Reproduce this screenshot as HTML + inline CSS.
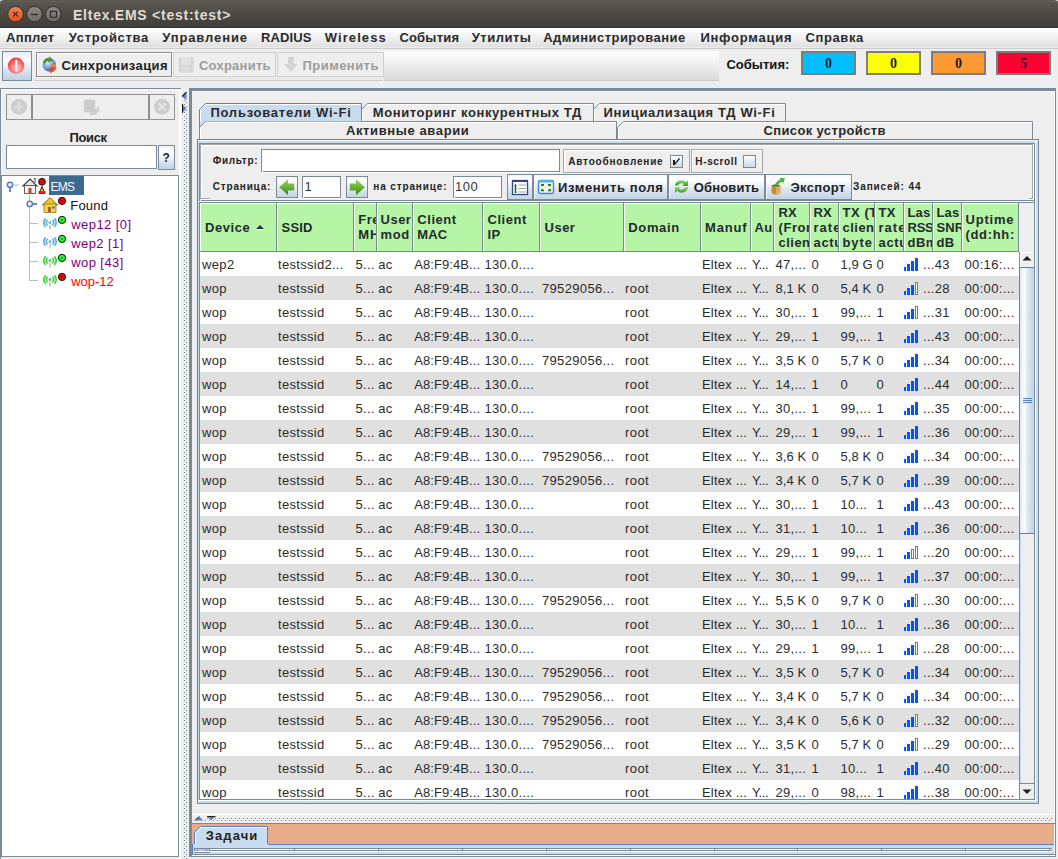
<!DOCTYPE html>
<html><head><meta charset="utf-8"><title>Eltex.EMS</title>
<style>
html,body{margin:0;padding:0;}
body{width:1058px;height:859px;overflow:hidden;position:relative;background:#eeeeee;font-family:"Liberation Sans",sans-serif;}
body div{position:absolute;}
.t{white-space:nowrap;}
svg{position:absolute;}
</style></head><body>
<div style="left:0px;top:0px;width:1058px;height:28px;background:#dcdcdc;"></div>
<div style="left:0px;top:0px;width:1058px;height:27px;background:linear-gradient(#59574f,#57554d 15%,#4d4b45 50%,#403e3a);border-radius:4px 4px 0 0;"></div>
<div style="left:0px;top:1px;width:1058px;height:1px;background:#636157;border-radius:4px 4px 0 0;"></div>
<div style="left:0px;top:27px;width:1058px;height:1px;background:#33322e;"></div>
<svg style="position:absolute;left:0;top:0" width="70" height="27">
<defs><linearGradient id="gc" x1="0" y1="0" x2="0" y2="1"><stop offset="0" stop-color="#f4845a"/><stop offset="1" stop-color="#e0501c"/></linearGradient>
<linearGradient id="gg" x1="0" y1="0" x2="0" y2="1"><stop offset="0" stop-color="#8a8984"/><stop offset="1" stop-color="#6b6a65"/></linearGradient></defs>
<circle cx="15.5" cy="14.2" r="7.8" fill="url(#gc)" stroke="#2e2d2a" stroke-width="1"/>
<path d="M13 11.7 L18 16.7 M18 11.7 L13 16.7" stroke="#3a2a22" stroke-width="1.2"/>
<circle cx="34.4" cy="14.2" r="7.8" fill="url(#gg)" stroke="#2e2d2a" stroke-width="1"/>
<path d="M31 14.5 H38" stroke="#2f2e2b" stroke-width="1.3"/>
<circle cx="53.3" cy="14.2" r="7.8" fill="url(#gg)" stroke="#2e2d2a" stroke-width="1"/>
<rect x="50.5" y="11.3" width="6" height="6" fill="none" stroke="#2f2e2b" stroke-width="1.2"/>
</svg>
<div class="t" style="left:73px;top:8px;font-size:14px;line-height:14px;font-weight:bold;color:#dfdbd2;letter-spacing:0.750px;">Eltex.EMS &lt;test:test&gt;</div>
<div style="left:0px;top:28px;width:1058px;height:20px;background:linear-gradient(#ffffff,#f8f8f8 20%,#ececec 60%,#dedede);"></div>
<div style="left:0px;top:47px;width:1058px;height:1px;background:#ebebeb;"></div>
<div style="left:0px;top:48px;width:1058px;height:1px;background:#cbcbcb;"></div>
<div class="t" style="left:6.1px;top:31px;font-size:13px;line-height:13px;font-weight:bold;color:#2a2a2a;letter-spacing:0.280px;">Апплет</div>
<div class="t" style="left:68.8px;top:31px;font-size:13px;line-height:13px;font-weight:bold;color:#2a2a2a;letter-spacing:0.667px;">Устройства</div>
<div class="t" style="left:162.2px;top:31px;font-size:13px;line-height:13px;font-weight:bold;color:#2a2a2a;letter-spacing:0.889px;">Управление</div>
<div class="t" style="left:261.1px;top:31px;font-size:13px;line-height:13px;font-weight:bold;color:#2a2a2a;letter-spacing:0.080px;">RADIUS</div>
<div class="t" style="left:324.7px;top:31px;font-size:13px;line-height:13px;font-weight:bold;color:#2a2a2a;letter-spacing:1.100px;">Wireless</div>
<div class="t" style="left:399.4px;top:31px;font-size:13px;line-height:13px;font-weight:bold;color:#2a2a2a;letter-spacing:0.200px;">События</div>
<div class="t" style="left:471.8px;top:31px;font-size:13px;line-height:13px;font-weight:bold;color:#2a2a2a;letter-spacing:0.483px;">Утилиты</div>
<div class="t" style="left:543.2px;top:31px;font-size:13px;line-height:13px;font-weight:bold;color:#2a2a2a;letter-spacing:0.456px;">Администрирование</div>
<div class="t" style="left:700.4px;top:31px;font-size:13px;line-height:13px;font-weight:bold;color:#2a2a2a;letter-spacing:0.767px;">Информация</div>
<div class="t" style="left:805.5px;top:31px;font-size:13px;line-height:13px;font-weight:bold;color:#2a2a2a;letter-spacing:0.600px;">Справка</div>
<div style="left:0px;top:49px;width:1058px;height:39px;background:#eeeeee;"></div>
<div style="left:2px;top:51px;width:28px;height:28px;border:1px solid #7a8a99;background:linear-gradient(#e4ecf6,#ffffff 30%,#dde8f3 60%,#bcd0e4);"></div>
<svg style="position:absolute;left:6px;top:56px" width="20" height="20">
<defs><radialGradient id="rg" cx="0.55" cy="0.65" r="0.75"><stop offset="0" stop-color="#ffc8c8"/><stop offset="0.55" stop-color="#ff6a6a"/><stop offset="1" stop-color="#f01818"/></radialGradient></defs>
<circle cx="10.1" cy="9.8" r="8.2" fill="url(#rg)"/>
<rect x="9" y="3.5" width="2.3" height="8" fill="#fff" rx="1"/>
<rect x="9" y="13" width="2.3" height="2.4" fill="#fff"/>
</svg>
<div style="left:36px;top:52px;width:134px;height:23px;border:1px solid #8a8a8a;box-shadow:inset 1px 1px 0 #fff, 1px 1px 0 #fff;background:#eeeeee;"></div>
<svg style="position:absolute;left:41px;top:56px" width="17" height="17">
<defs><radialGradient id="gl" cx="0.4" cy="0.35" r="0.7"><stop offset="0" stop-color="#e0ecf8"/><stop offset="0.5" stop-color="#7fa4d8"/><stop offset="1" stop-color="#2e5aa8"/></radialGradient></defs>
<circle cx="8.3" cy="8.8" r="6.8" fill="url(#gl)"/>
<path d="M2.3 6.5 Q3.5 2 8 2.3 L8.5 0.8 L11.5 4.2 L7.5 6.2 L7.8 4.5 Q4.8 4.5 3.8 7.5 Z" fill="#4a9a22" stroke="#2a6a10" stroke-width="0.4"/>
<path d="M14.5 9.5 L14.8 12.5 Q13.5 15.8 10 16 L9.7 17 L8.3 13.5 L10.8 11.5 L10.5 13.6 Q12.3 13.2 12.6 11 Z" fill="#f05a28" stroke="#a02a10" stroke-width="0.5"/>
<rect x="9.8" y="8.2" width="5.2" height="3.2" fill="#f47a40"/>
</svg>
<div class="t" style="left:61.4px;top:59px;font-size:13px;line-height:13px;font-weight:bold;color:#222;letter-spacing:0.408px;">Синхронизация</div>
<div style="left:173px;top:52px;width:101px;height:23px;border:1px solid #cfcfcf;background:#eeeeee;"></div>
<div style="left:277px;top:52px;width:105px;height:23px;border:1px solid #cfcfcf;background:#eeeeee;"></div>
<svg style="position:absolute;left:178px;top:57px" width="16" height="16">
<path d="M0.5 0.5 H15.5 V15.5 H2.5 L0.5 13.5 Z" fill="#d6d6d6"/>
<rect x="3" y="1" width="10" height="7" fill="#e2e2e2"/>
<rect x="4" y="9.5" width="8" height="6" fill="#dcdcdc"/>
</svg>
<svg style="position:absolute;left:282px;top:56px" width="18" height="18">
<path d="M6 1 H12 V8 H16 L9 16 L2 8 H6 Z" fill="#d4d4d4"/>
</svg>
<div class="t" style="left:198.9px;top:59px;font-size:13px;line-height:13px;font-weight:bold;color:#9c9c9c;letter-spacing:0.262px;">Сохранить</div>
<div class="t" style="left:302.5px;top:59px;font-size:13px;line-height:13px;font-weight:bold;color:#9c9c9c;letter-spacing:0.450px;">Применить</div>
<div style="left:384px;top:51px;width:335px;height:29px;background:linear-gradient(#ffffff,#f3f3f3 35%,#e6e6e6 70%,#dadada);border-bottom:1px solid #cccccc;"></div>
<div style="left:34px;top:78px;width:349px;height:1px;background:#e2e2e2;"></div>
<div style="left:34px;top:80px;width:349px;height:1px;background:#cdcdcd;"></div>
<div class="t" style="left:726.4px;top:58px;font-size:13px;line-height:13px;font-weight:bold;color:#111;letter-spacing:0.029px;">События:</div>
<div style="left:801px;top:51px;width:51px;height:20px;border:2px solid #7d7d7d;background:#00bfff;"></div>
<div class="t" style="left:825px;top:57px;font-size:14px;line-height:14px;font-weight:bold;font-family:'Liberation Serif',serif;color:#1a1a2a;">0</div>
<div style="left:866px;top:51px;width:51px;height:20px;border:2px solid #7d7d7d;background:#ffff00;"></div>
<div class="t" style="left:890px;top:57px;font-size:14px;line-height:14px;font-weight:bold;font-family:'Liberation Serif',serif;color:#1a1a2a;">0</div>
<div style="left:931px;top:51px;width:51px;height:20px;border:2px solid #7d7d7d;background:#ff9933;"></div>
<div class="t" style="left:955px;top:57px;font-size:14px;line-height:14px;font-weight:bold;font-family:'Liberation Serif',serif;color:#1a1a2a;">0</div>
<div style="left:996px;top:51px;width:51px;height:20px;border:2px solid #7d7d7d;background:#ff0033;"></div>
<div class="t" style="left:1020px;top:57px;font-size:14px;line-height:14px;font-weight:bold;font-family:'Liberation Serif',serif;color:#1a1a2a;">5</div>
<div style="left:0px;top:88px;width:181px;height:771px;background:#eeeeee;"></div>
<div style="left:0px;top:88px;width:181px;height:1px;background:#7a8a99;"></div>
<div style="left:0px;top:88px;width:1px;height:771px;background:#7a8a99;"></div>
<div style="left:1px;top:89px;width:180px;height:1px;background:#fafafa;"></div>
<div style="left:1px;top:89px;width:1px;height:86px;background:#fafafa;"></div>
<div style="left:6px;top:94px;width:167px;height:24px;border:1px solid #909090;background:#eeeeee;"></div>
<div style="left:31px;top:95px;width:2px;height:24px;background:#909090;"></div>
<div style="left:148px;top:95px;width:2px;height:24px;background:#909090;"></div>
<svg style="position:absolute;left:10px;top:98px" width="18" height="18">
<circle cx="9" cy="8.7" r="8" fill="#cdcdcd"/><path d="M9 4 V13.5 M4.3 8.7 H13.7" stroke="#dddddd" stroke-width="2"/></svg>
<svg style="position:absolute;left:153px;top:98px" width="18" height="18">
<circle cx="9" cy="8.7" r="8" fill="#cdcdcd"/><path d="M5.7 5.4 L12.3 12 M12.3 5.4 L5.7 12" stroke="#e4e4e4" stroke-width="2.2"/></svg>
<svg style="position:absolute;left:82px;top:98px" width="18" height="18">
<g fill="#cdcdcd" stroke="#c2c2c2" stroke-width="0.6">
<rect x="2" y="10" width="11" height="4" rx="2"/><rect x="2" y="6" width="11" height="4" rx="2"/><rect x="2" y="2" width="11" height="4.5" rx="2.2"/>
</g>
<path d="M9 11 L15.5 11 L15.5 8.5 L17 10 L17 13.5 L11 13.5 Z" fill="#d0d0d0" stroke="#c4c4c4" stroke-width="0.5"/>
<path d="M8 16.5 L8 14 L10 12 L10 13.5 L15.5 13.5 L14 16.5 Z" fill="#d0d0d0" stroke="#c4c4c4" stroke-width="0.5"/>
</svg>
<div class="t" style="left:69.5px;top:131px;font-size:13px;line-height:13px;font-weight:bold;color:#222;letter-spacing:-0.375px;">Поиск</div>
<div style="left:6px;top:145px;width:151px;height:24px;background:#fff;border-top:1px solid #7a8a99;border-left:1px solid #7a8a99;border-right:1px solid #7a8a99;border-bottom:1px solid #7a8a99;box-sizing:border-box;"></div>
<div style="left:158px;top:145px;width:17px;height:25px;border:1px solid #7a8a99;box-sizing:border-box;background:linear-gradient(#eef3fa,#ffffff 30%,#d8e4f0 70%,#bed2e6);"></div>
<div class="t" style="left:162.5px;top:152px;font-size:12px;line-height:12px;font-weight:bold;color:#222;">?</div>
<div style="left:1px;top:175px;width:178px;height:682px;background:#fff;border:1px solid #7a8a99;box-sizing:border-box;"></div>
<div style="left:0px;top:175px;width:2px;height:682px;background:#7a8a99;"></div>
<div style="left:181px;top:88px;width:8px;height:771px;background:#eeeeee;"></div>
<div style="left:179px;top:89px;width:2px;height:770px;background:#ffffff;"></div>
<svg style="position:absolute;left:0;top:0" width="190" height="859"><g fill="#6a7a8a"><rect x="184" y="100" width="1" height="1"/><rect x="186" y="102" width="1" height="1"/><rect x="184" y="104" width="1" height="1"/><rect x="186" y="106" width="1" height="1"/><rect x="184" y="108" width="1" height="1"/><rect x="186" y="110" width="1" height="1"/><rect x="184" y="112" width="1" height="1"/><rect x="186" y="114" width="1" height="1"/><rect x="184" y="116" width="1" height="1"/><rect x="186" y="118" width="1" height="1"/><rect x="184" y="120" width="1" height="1"/><rect x="186" y="122" width="1" height="1"/><rect x="184" y="124" width="1" height="1"/><rect x="186" y="126" width="1" height="1"/><rect x="184" y="128" width="1" height="1"/><rect x="186" y="130" width="1" height="1"/><rect x="184" y="132" width="1" height="1"/><rect x="186" y="134" width="1" height="1"/><rect x="184" y="136" width="1" height="1"/><rect x="186" y="138" width="1" height="1"/><rect x="184" y="140" width="1" height="1"/><rect x="186" y="142" width="1" height="1"/><rect x="184" y="144" width="1" height="1"/><rect x="186" y="146" width="1" height="1"/><rect x="184" y="148" width="1" height="1"/><rect x="186" y="150" width="1" height="1"/><rect x="184" y="152" width="1" height="1"/><rect x="186" y="154" width="1" height="1"/><rect x="184" y="156" width="1" height="1"/><rect x="186" y="158" width="1" height="1"/><rect x="184" y="160" width="1" height="1"/><rect x="186" y="162" width="1" height="1"/><rect x="184" y="164" width="1" height="1"/><rect x="186" y="166" width="1" height="1"/><rect x="184" y="168" width="1" height="1"/><rect x="186" y="170" width="1" height="1"/><rect x="184" y="172" width="1" height="1"/><rect x="186" y="174" width="1" height="1"/><rect x="184" y="176" width="1" height="1"/><rect x="186" y="178" width="1" height="1"/><rect x="184" y="180" width="1" height="1"/><rect x="186" y="182" width="1" height="1"/><rect x="184" y="184" width="1" height="1"/><rect x="186" y="186" width="1" height="1"/><rect x="184" y="188" width="1" height="1"/><rect x="186" y="190" width="1" height="1"/><rect x="184" y="192" width="1" height="1"/><rect x="186" y="194" width="1" height="1"/><rect x="184" y="196" width="1" height="1"/><rect x="186" y="198" width="1" height="1"/><rect x="184" y="200" width="1" height="1"/><rect x="186" y="202" width="1" height="1"/><rect x="184" y="204" width="1" height="1"/><rect x="186" y="206" width="1" height="1"/><rect x="184" y="208" width="1" height="1"/><rect x="186" y="210" width="1" height="1"/><rect x="184" y="212" width="1" height="1"/><rect x="186" y="214" width="1" height="1"/><rect x="184" y="216" width="1" height="1"/><rect x="186" y="218" width="1" height="1"/><rect x="184" y="220" width="1" height="1"/><rect x="186" y="222" width="1" height="1"/><rect x="184" y="224" width="1" height="1"/><rect x="186" y="226" width="1" height="1"/><rect x="184" y="228" width="1" height="1"/><rect x="186" y="230" width="1" height="1"/><rect x="184" y="232" width="1" height="1"/><rect x="186" y="234" width="1" height="1"/><rect x="184" y="236" width="1" height="1"/><rect x="186" y="238" width="1" height="1"/><rect x="184" y="240" width="1" height="1"/><rect x="186" y="242" width="1" height="1"/><rect x="184" y="244" width="1" height="1"/><rect x="186" y="246" width="1" height="1"/><rect x="184" y="248" width="1" height="1"/><rect x="186" y="250" width="1" height="1"/><rect x="184" y="252" width="1" height="1"/><rect x="186" y="254" width="1" height="1"/><rect x="184" y="256" width="1" height="1"/><rect x="186" y="258" width="1" height="1"/><rect x="184" y="260" width="1" height="1"/><rect x="186" y="262" width="1" height="1"/><rect x="184" y="264" width="1" height="1"/><rect x="186" y="266" width="1" height="1"/><rect x="184" y="268" width="1" height="1"/><rect x="186" y="270" width="1" height="1"/><rect x="184" y="272" width="1" height="1"/><rect x="186" y="274" width="1" height="1"/><rect x="184" y="276" width="1" height="1"/><rect x="186" y="278" width="1" height="1"/><rect x="184" y="280" width="1" height="1"/><rect x="186" y="282" width="1" height="1"/><rect x="184" y="284" width="1" height="1"/><rect x="186" y="286" width="1" height="1"/><rect x="184" y="288" width="1" height="1"/><rect x="186" y="290" width="1" height="1"/><rect x="184" y="292" width="1" height="1"/><rect x="186" y="294" width="1" height="1"/><rect x="184" y="296" width="1" height="1"/><rect x="186" y="298" width="1" height="1"/><rect x="184" y="300" width="1" height="1"/><rect x="186" y="302" width="1" height="1"/><rect x="184" y="304" width="1" height="1"/><rect x="186" y="306" width="1" height="1"/><rect x="184" y="308" width="1" height="1"/><rect x="186" y="310" width="1" height="1"/><rect x="184" y="312" width="1" height="1"/><rect x="186" y="314" width="1" height="1"/><rect x="184" y="316" width="1" height="1"/><rect x="186" y="318" width="1" height="1"/><rect x="184" y="320" width="1" height="1"/><rect x="186" y="322" width="1" height="1"/><rect x="184" y="324" width="1" height="1"/><rect x="186" y="326" width="1" height="1"/><rect x="184" y="328" width="1" height="1"/><rect x="186" y="330" width="1" height="1"/><rect x="184" y="332" width="1" height="1"/><rect x="186" y="334" width="1" height="1"/><rect x="184" y="336" width="1" height="1"/><rect x="186" y="338" width="1" height="1"/><rect x="184" y="340" width="1" height="1"/><rect x="186" y="342" width="1" height="1"/><rect x="184" y="344" width="1" height="1"/><rect x="186" y="346" width="1" height="1"/><rect x="184" y="348" width="1" height="1"/><rect x="186" y="350" width="1" height="1"/><rect x="184" y="352" width="1" height="1"/><rect x="186" y="354" width="1" height="1"/><rect x="184" y="356" width="1" height="1"/><rect x="186" y="358" width="1" height="1"/><rect x="184" y="360" width="1" height="1"/><rect x="186" y="362" width="1" height="1"/><rect x="184" y="364" width="1" height="1"/><rect x="186" y="366" width="1" height="1"/><rect x="184" y="368" width="1" height="1"/><rect x="186" y="370" width="1" height="1"/><rect x="184" y="372" width="1" height="1"/><rect x="186" y="374" width="1" height="1"/><rect x="184" y="376" width="1" height="1"/><rect x="186" y="378" width="1" height="1"/><rect x="184" y="380" width="1" height="1"/><rect x="186" y="382" width="1" height="1"/><rect x="184" y="384" width="1" height="1"/><rect x="186" y="386" width="1" height="1"/><rect x="184" y="388" width="1" height="1"/><rect x="186" y="390" width="1" height="1"/><rect x="184" y="392" width="1" height="1"/><rect x="186" y="394" width="1" height="1"/><rect x="184" y="396" width="1" height="1"/><rect x="186" y="398" width="1" height="1"/><rect x="184" y="400" width="1" height="1"/><rect x="186" y="402" width="1" height="1"/><rect x="184" y="404" width="1" height="1"/><rect x="186" y="406" width="1" height="1"/><rect x="184" y="408" width="1" height="1"/><rect x="186" y="410" width="1" height="1"/><rect x="184" y="412" width="1" height="1"/><rect x="186" y="414" width="1" height="1"/><rect x="184" y="416" width="1" height="1"/><rect x="186" y="418" width="1" height="1"/><rect x="184" y="420" width="1" height="1"/><rect x="186" y="422" width="1" height="1"/><rect x="184" y="424" width="1" height="1"/><rect x="186" y="426" width="1" height="1"/><rect x="184" y="428" width="1" height="1"/><rect x="186" y="430" width="1" height="1"/><rect x="184" y="432" width="1" height="1"/><rect x="186" y="434" width="1" height="1"/><rect x="184" y="436" width="1" height="1"/><rect x="186" y="438" width="1" height="1"/><rect x="184" y="440" width="1" height="1"/><rect x="186" y="442" width="1" height="1"/><rect x="184" y="444" width="1" height="1"/><rect x="186" y="446" width="1" height="1"/><rect x="184" y="448" width="1" height="1"/><rect x="186" y="450" width="1" height="1"/><rect x="184" y="452" width="1" height="1"/><rect x="186" y="454" width="1" height="1"/><rect x="184" y="456" width="1" height="1"/><rect x="186" y="458" width="1" height="1"/><rect x="184" y="460" width="1" height="1"/><rect x="186" y="462" width="1" height="1"/><rect x="184" y="464" width="1" height="1"/><rect x="186" y="466" width="1" height="1"/><rect x="184" y="468" width="1" height="1"/><rect x="186" y="470" width="1" height="1"/><rect x="184" y="472" width="1" height="1"/><rect x="186" y="474" width="1" height="1"/><rect x="184" y="476" width="1" height="1"/><rect x="186" y="478" width="1" height="1"/><rect x="184" y="480" width="1" height="1"/><rect x="186" y="482" width="1" height="1"/><rect x="184" y="484" width="1" height="1"/><rect x="186" y="486" width="1" height="1"/><rect x="184" y="488" width="1" height="1"/><rect x="186" y="490" width="1" height="1"/><rect x="184" y="492" width="1" height="1"/><rect x="186" y="494" width="1" height="1"/><rect x="184" y="496" width="1" height="1"/><rect x="186" y="498" width="1" height="1"/><rect x="184" y="500" width="1" height="1"/><rect x="186" y="502" width="1" height="1"/><rect x="184" y="504" width="1" height="1"/><rect x="186" y="506" width="1" height="1"/><rect x="184" y="508" width="1" height="1"/><rect x="186" y="510" width="1" height="1"/><rect x="184" y="512" width="1" height="1"/><rect x="186" y="514" width="1" height="1"/><rect x="184" y="516" width="1" height="1"/><rect x="186" y="518" width="1" height="1"/><rect x="184" y="520" width="1" height="1"/><rect x="186" y="522" width="1" height="1"/><rect x="184" y="524" width="1" height="1"/><rect x="186" y="526" width="1" height="1"/><rect x="184" y="528" width="1" height="1"/><rect x="186" y="530" width="1" height="1"/><rect x="184" y="532" width="1" height="1"/><rect x="186" y="534" width="1" height="1"/><rect x="184" y="536" width="1" height="1"/><rect x="186" y="538" width="1" height="1"/><rect x="184" y="540" width="1" height="1"/><rect x="186" y="542" width="1" height="1"/><rect x="184" y="544" width="1" height="1"/><rect x="186" y="546" width="1" height="1"/><rect x="184" y="548" width="1" height="1"/><rect x="186" y="550" width="1" height="1"/><rect x="184" y="552" width="1" height="1"/><rect x="186" y="554" width="1" height="1"/><rect x="184" y="556" width="1" height="1"/><rect x="186" y="558" width="1" height="1"/><rect x="184" y="560" width="1" height="1"/><rect x="186" y="562" width="1" height="1"/><rect x="184" y="564" width="1" height="1"/><rect x="186" y="566" width="1" height="1"/><rect x="184" y="568" width="1" height="1"/><rect x="186" y="570" width="1" height="1"/><rect x="184" y="572" width="1" height="1"/><rect x="186" y="574" width="1" height="1"/><rect x="184" y="576" width="1" height="1"/><rect x="186" y="578" width="1" height="1"/><rect x="184" y="580" width="1" height="1"/><rect x="186" y="582" width="1" height="1"/><rect x="184" y="584" width="1" height="1"/><rect x="186" y="586" width="1" height="1"/><rect x="184" y="588" width="1" height="1"/><rect x="186" y="590" width="1" height="1"/><rect x="184" y="592" width="1" height="1"/><rect x="186" y="594" width="1" height="1"/><rect x="184" y="596" width="1" height="1"/><rect x="186" y="598" width="1" height="1"/><rect x="184" y="600" width="1" height="1"/><rect x="186" y="602" width="1" height="1"/><rect x="184" y="604" width="1" height="1"/><rect x="186" y="606" width="1" height="1"/><rect x="184" y="608" width="1" height="1"/><rect x="186" y="610" width="1" height="1"/><rect x="184" y="612" width="1" height="1"/><rect x="186" y="614" width="1" height="1"/><rect x="184" y="616" width="1" height="1"/><rect x="186" y="618" width="1" height="1"/><rect x="184" y="620" width="1" height="1"/><rect x="186" y="622" width="1" height="1"/><rect x="184" y="624" width="1" height="1"/><rect x="186" y="626" width="1" height="1"/><rect x="184" y="628" width="1" height="1"/><rect x="186" y="630" width="1" height="1"/><rect x="184" y="632" width="1" height="1"/><rect x="186" y="634" width="1" height="1"/><rect x="184" y="636" width="1" height="1"/><rect x="186" y="638" width="1" height="1"/><rect x="184" y="640" width="1" height="1"/><rect x="186" y="642" width="1" height="1"/><rect x="184" y="644" width="1" height="1"/><rect x="186" y="646" width="1" height="1"/><rect x="184" y="648" width="1" height="1"/><rect x="186" y="650" width="1" height="1"/><rect x="184" y="652" width="1" height="1"/><rect x="186" y="654" width="1" height="1"/><rect x="184" y="656" width="1" height="1"/><rect x="186" y="658" width="1" height="1"/><rect x="184" y="660" width="1" height="1"/><rect x="186" y="662" width="1" height="1"/><rect x="184" y="664" width="1" height="1"/><rect x="186" y="666" width="1" height="1"/><rect x="184" y="668" width="1" height="1"/><rect x="186" y="670" width="1" height="1"/><rect x="184" y="672" width="1" height="1"/><rect x="186" y="674" width="1" height="1"/><rect x="184" y="676" width="1" height="1"/><rect x="186" y="678" width="1" height="1"/><rect x="184" y="680" width="1" height="1"/><rect x="186" y="682" width="1" height="1"/><rect x="184" y="684" width="1" height="1"/><rect x="186" y="686" width="1" height="1"/><rect x="184" y="688" width="1" height="1"/><rect x="186" y="690" width="1" height="1"/><rect x="184" y="692" width="1" height="1"/><rect x="186" y="694" width="1" height="1"/><rect x="184" y="696" width="1" height="1"/><rect x="186" y="698" width="1" height="1"/><rect x="184" y="700" width="1" height="1"/><rect x="186" y="702" width="1" height="1"/><rect x="184" y="704" width="1" height="1"/><rect x="186" y="706" width="1" height="1"/><rect x="184" y="708" width="1" height="1"/><rect x="186" y="710" width="1" height="1"/><rect x="184" y="712" width="1" height="1"/><rect x="186" y="714" width="1" height="1"/><rect x="184" y="716" width="1" height="1"/><rect x="186" y="718" width="1" height="1"/><rect x="184" y="720" width="1" height="1"/><rect x="186" y="722" width="1" height="1"/><rect x="184" y="724" width="1" height="1"/><rect x="186" y="726" width="1" height="1"/><rect x="184" y="728" width="1" height="1"/><rect x="186" y="730" width="1" height="1"/><rect x="184" y="732" width="1" height="1"/><rect x="186" y="734" width="1" height="1"/><rect x="184" y="736" width="1" height="1"/><rect x="186" y="738" width="1" height="1"/><rect x="184" y="740" width="1" height="1"/><rect x="186" y="742" width="1" height="1"/><rect x="184" y="744" width="1" height="1"/><rect x="186" y="746" width="1" height="1"/><rect x="184" y="748" width="1" height="1"/><rect x="186" y="750" width="1" height="1"/><rect x="184" y="752" width="1" height="1"/><rect x="186" y="754" width="1" height="1"/><rect x="184" y="756" width="1" height="1"/><rect x="186" y="758" width="1" height="1"/><rect x="184" y="760" width="1" height="1"/><rect x="186" y="762" width="1" height="1"/><rect x="184" y="764" width="1" height="1"/><rect x="186" y="766" width="1" height="1"/><rect x="184" y="768" width="1" height="1"/><rect x="186" y="770" width="1" height="1"/><rect x="184" y="772" width="1" height="1"/><rect x="186" y="774" width="1" height="1"/><rect x="184" y="776" width="1" height="1"/><rect x="186" y="778" width="1" height="1"/><rect x="184" y="780" width="1" height="1"/><rect x="186" y="782" width="1" height="1"/><rect x="184" y="784" width="1" height="1"/><rect x="186" y="786" width="1" height="1"/><rect x="184" y="788" width="1" height="1"/><rect x="186" y="790" width="1" height="1"/><rect x="184" y="792" width="1" height="1"/><rect x="186" y="794" width="1" height="1"/><rect x="184" y="796" width="1" height="1"/><rect x="186" y="798" width="1" height="1"/><rect x="184" y="800" width="1" height="1"/><rect x="186" y="802" width="1" height="1"/><rect x="184" y="804" width="1" height="1"/><rect x="186" y="806" width="1" height="1"/><rect x="184" y="808" width="1" height="1"/><rect x="186" y="810" width="1" height="1"/><rect x="184" y="812" width="1" height="1"/><rect x="186" y="814" width="1" height="1"/><rect x="184" y="816" width="1" height="1"/><rect x="186" y="818" width="1" height="1"/><rect x="184" y="820" width="1" height="1"/><rect x="186" y="822" width="1" height="1"/><rect x="184" y="824" width="1" height="1"/><rect x="186" y="826" width="1" height="1"/><rect x="184" y="828" width="1" height="1"/><rect x="186" y="830" width="1" height="1"/><rect x="184" y="832" width="1" height="1"/><rect x="186" y="834" width="1" height="1"/><rect x="184" y="836" width="1" height="1"/><rect x="186" y="838" width="1" height="1"/><rect x="184" y="840" width="1" height="1"/><rect x="186" y="842" width="1" height="1"/><rect x="184" y="844" width="1" height="1"/><rect x="186" y="846" width="1" height="1"/><rect x="184" y="848" width="1" height="1"/><rect x="186" y="850" width="1" height="1"/><rect x="184" y="852" width="1" height="1"/><rect x="186" y="854" width="1" height="1"/><rect x="184" y="856" width="1" height="1"/><rect x="186" y="858" width="1" height="1"/></g><path d="M186.5 92 L182 96.5 L186.5 100 Z" fill="#5b7fc6"/><path d="M186.3 92.2 L182.2 96.3" stroke="#111" stroke-width="1.2"/><path d="M182.5 104.5 L186.5 108.5 L182.5 112.5 Z" fill="#5b7fc6"/><rect x="182" y="104" width="1" height="9" fill="#111"/></svg>
<svg style="position:absolute;left:0;top:0" width="180" height="300"><line x1="29.5" y1="195" x2="29.5" y2="281" stroke="#a9bfd6" stroke-width="1"/><line x1="29.5" y1="223.5" x2="38" y2="223.5" stroke="#a9bfd6" stroke-width="1"/><line x1="29.5" y1="242.5" x2="38" y2="242.5" stroke="#a9bfd6" stroke-width="1"/><line x1="29.5" y1="261.5" x2="38" y2="261.5" stroke="#a9bfd6" stroke-width="1"/><line x1="29.5" y1="280.5" x2="38" y2="280.5" stroke="#a9bfd6" stroke-width="1"/><circle cx="10" cy="184.8" r="2.6" fill="#fff" stroke="#5b7fc6" stroke-width="1.6"/><line x1="10" y1="187.5" x2="10" y2="192" stroke="#5b7fc6" stroke-width="1.8"/><line x1="13" y1="185" x2="19" y2="185" stroke="#a9bfd6"/><circle cx="29.8" cy="203.9" r="2.6" fill="#fff" stroke="#5b7fc6" stroke-width="1.6"/><line x1="32.5" y1="204" x2="37" y2="204" stroke="#5b7fc6" stroke-width="1.8"/><path d="M23 186 L30 179 L37 186 Z" fill="#e8e8e8" stroke="#3a3a3a" stroke-width="1.1"/><rect x="24.5" y="185.5" width="11" height="8" fill="#f2f2f2" stroke="#555" stroke-width="0.9"/><rect x="28.5" y="188" width="3" height="5.5" fill="#b0501a"/><rect x="34" y="178.5" width="1.5" height="4" fill="#eee" stroke="#555" stroke-width="0.6"/><path d="M39 193.5 L42 186.5 L45 193.5 Z" fill="#f0c020" stroke="#111" stroke-width="0.9"/><rect x="38.5" y="191" width="7" height="2.5" fill="#ee2020"/><circle cx="42" cy="181.8" r="3.4" fill="#ff0000" stroke="#111" stroke-width="1"/><circle cx="42" cy="181.8" r="1" fill="#600"/><path d="M42.5 205 L50 197.5 L57.5 205 Z" fill="#f5c320" stroke="#6a5a20" stroke-width="0.9"/><rect x="44" y="204" width="12" height="8.5" fill="#fbd040" stroke="#8a6a10" stroke-width="0.7"/><rect x="48" y="207" width="3" height="5" fill="#a06020"/><rect x="52" y="206.5" width="3" height="2" fill="#5a7ac0"/><circle cx="62" cy="200.9" r="3.6" fill="#ff0000" stroke="#111" stroke-width="1"/><circle cx="62" cy="200.9" r="1" fill="#600"/><rect x="49" y="224.6" width="2" height="5" fill="#cfcfcf"/><circle cx="50" cy="222.6" r="1.4" fill="#5aaedc"/><path d="M47.6 219.79999999999998 A3.6 3.6 0 0 0 47.6 225.4 M52.4 219.79999999999998 A3.6 3.6 0 0 1 52.4 225.4" stroke="#5aaedc" fill="none" stroke-width="1.7"/><path d="M45.6 218.29999999999998 A6 6 0 0 0 45.6 226.9 M54.4 218.29999999999998 A6 6 0 0 1 54.4 226.9" stroke="#5aaedc" fill="none" stroke-width="1.7"/><circle cx="62" cy="219.9" r="3.6" fill="#22ff22" stroke="#111" stroke-width="1"/><circle cx="62" cy="219.9" r="0.9" fill="#0a6a2a"/><rect x="49" y="243.6" width="2" height="5" fill="#cfcfcf"/><circle cx="50" cy="241.6" r="1.4" fill="#5aaedc"/><path d="M47.6 238.79999999999998 A3.6 3.6 0 0 0 47.6 244.4 M52.4 238.79999999999998 A3.6 3.6 0 0 1 52.4 244.4" stroke="#5aaedc" fill="none" stroke-width="1.7"/><path d="M45.6 237.29999999999998 A6 6 0 0 0 45.6 245.9 M54.4 237.29999999999998 A6 6 0 0 1 54.4 245.9" stroke="#5aaedc" fill="none" stroke-width="1.7"/><circle cx="62" cy="238.9" r="3.6" fill="#22ff22" stroke="#111" stroke-width="1"/><circle cx="62" cy="238.9" r="0.9" fill="#0a6a2a"/><rect x="49" y="262.6" width="2" height="5" fill="#cfcfcf"/><circle cx="50" cy="260.6" r="1.4" fill="#3cd23c"/><path d="M47.6 257.8 A3.6 3.6 0 0 0 47.6 263.40000000000003 M52.4 257.8 A3.6 3.6 0 0 1 52.4 263.40000000000003" stroke="#3cd23c" fill="none" stroke-width="1.7"/><path d="M45.6 256.3 A6 6 0 0 0 45.6 264.90000000000003 M54.4 256.3 A6 6 0 0 1 54.4 264.90000000000003" stroke="#3cd23c" fill="none" stroke-width="1.7"/><circle cx="62" cy="257.90000000000003" r="3.6" fill="#22ff22" stroke="#111" stroke-width="1"/><circle cx="62" cy="257.90000000000003" r="0.9" fill="#0a6a2a"/><rect x="49" y="281.6" width="2" height="5" fill="#cfcfcf"/><circle cx="50" cy="279.6" r="1.4" fill="#3cd23c"/><path d="M47.6 276.8 A3.6 3.6 0 0 0 47.6 282.40000000000003 M52.4 276.8 A3.6 3.6 0 0 1 52.4 282.40000000000003" stroke="#3cd23c" fill="none" stroke-width="1.7"/><path d="M45.6 275.3 A6 6 0 0 0 45.6 283.90000000000003 M54.4 275.3 A6 6 0 0 1 54.4 283.90000000000003" stroke="#3cd23c" fill="none" stroke-width="1.7"/><circle cx="62" cy="276.90000000000003" r="3.6" fill="#ff0000" stroke="#111" stroke-width="1"/><circle cx="62" cy="276.90000000000003" r="0.9" fill="#660000"/></svg>
<div style="left:49px;top:176px;width:35px;height:19px;background:#3d6a8f;"></div>
<div class="t" style="left:50.6px;top:181px;font-size:12px;line-height:12px;color:#f4f4ff;letter-spacing:-0.750px;">EMS</div>
<div class="t" style="left:70.2px;top:199px;font-size:13px;line-height:13px;color:#111;letter-spacing:0.250px;">Found</div>
<div class="t" style="left:71.2px;top:218px;font-size:13px;line-height:13px;color:#800080;letter-spacing:0.450px;">wep12 [0]</div>
<div class="t" style="left:71.2px;top:237px;font-size:13px;line-height:13px;color:#800080;letter-spacing:0.429px;">wep2 [1]</div>
<div class="t" style="left:71.2px;top:256px;font-size:13px;line-height:13px;color:#800080;letter-spacing:0.429px;">wop [43]</div>
<div class="t" style="left:71.2px;top:275px;font-size:13px;line-height:13px;color:#ff0000;letter-spacing:0.000px;">wop-12</div>
<div style="left:189px;top:88px;width:867px;height:769px;background:#eeeeee;"></div>
<div style="left:189px;top:88px;width:867px;height:3px;background:#7a8a99;"></div>
<div style="left:189px;top:88px;width:3px;height:769px;background:#7a8a99;"></div>
<div style="left:1055px;top:91px;width:1px;height:766px;background:#7a8a99;"></div>
<div style="left:192px;top:856px;width:864px;height:1px;background:#7a8a99;"></div>
<div style="left:192px;top:91px;width:863px;height:1px;background:#f8f8f8;"></div>
<div style="left:1054px;top:92px;width:1px;height:764px;background:#ffffff;"></div>
<svg style="position:absolute;left:0;top:0" width="1058" height="150"><path d="M199.5 139 V127.5 L205.5 121.5 H616.5 V139" fill="#eeeeee" stroke="#7a8a99" stroke-width="1"/><path d="M200.5 139 V127.9 L205.9 122.5 H615.5" fill="none" stroke="#ffffff" stroke-width="1"/><path d="M617.5 139 V127.5 L623.5 121.5 H1032.5 V139" fill="#eeeeee" stroke="#7a8a99" stroke-width="1"/><path d="M618.5 139 V127.9 L623.9 122.5 H1031.5" fill="none" stroke="#ffffff" stroke-width="1"/><path d="M361.5 121 V109.5 L367.5 103.5 H593.5 V121" fill="#eeeeee" stroke="#7a8a99" stroke-width="1"/><path d="M362.5 121 V109.9 L367.9 104.5 H592.5" fill="none" stroke="#ffffff" stroke-width="1"/><path d="M593.5 121 V109.5 L599.5 103.5 H785.5 V121" fill="#eeeeee" stroke="#7a8a99" stroke-width="1"/><path d="M594.5 121 V109.9 L599.9 104.5 H784.5" fill="none" stroke="#ffffff" stroke-width="1"/><path d="M199.5 121.5 V109.5 L205.5 103.5 H361.5 V121.5" fill="#c8dcf0" stroke="#5b7fc6" stroke-width="1"/><path d="M200.5 121.5 V109.9 L205.9 104.5 H360.5" fill="none" stroke="#ffffff" stroke-width="1"/><path d="M200 121.5 H205.5 L200 127 Z" fill="#c8dcf0"/><line x1="199.5" y1="121" x2="199.5" y2="127.5" stroke="#5b7fc6"/><line x1="200" y1="127" x2="205.8" y2="121.2" stroke="#7a8a99"/></svg>
<div class="t" style="left:210.4px;top:106px;font-size:13px;line-height:13px;font-weight:bold;color:#2a2a2a;letter-spacing:0.759px;">Пользователи Wi-Fi</div>
<div class="t" style="left:372.7px;top:106px;font-size:13px;line-height:13px;font-weight:bold;color:#2a2a2a;letter-spacing:0.612px;">Мониторинг конкурентных ТД</div>
<div class="t" style="left:603.6px;top:106px;font-size:13px;line-height:13px;font-weight:bold;color:#2a2a2a;letter-spacing:0.652px;">Инициализация ТД Wi-Fi</div>
<div class="t" style="left:345.9px;top:124px;font-size:13px;line-height:13px;font-weight:bold;color:#2a2a2a;letter-spacing:0.621px;">Активные аварии</div>
<div class="t" style="left:763.5px;top:124px;font-size:13px;line-height:13px;font-weight:bold;color:#2a2a2a;letter-spacing:0.367px;">Список устройств</div>
<div style="left:197px;top:139px;width:842px;height:665px;background:#c8dcf0;"></div>
<div style="left:197px;top:139px;width:842px;height:1px;background:#5b7fc6;"></div>
<div style="left:197px;top:139px;width:1px;height:664px;background:#5b7fc6;"></div>
<div style="left:1038px;top:140px;width:1px;height:664px;background:#7a8a99;"></div>
<div style="left:197px;top:803px;width:842px;height:1px;background:#7a8a99;"></div>
<div style="left:198px;top:140px;width:840px;height:1px;background:#ffffff;"></div>
<div style="left:1035px;top:141px;width:1px;height:660px;background:#ffffff;"></div>
<div style="left:198px;top:800px;width:837px;height:1px;background:#ffffff;"></div>
<div style="left:199px;top:143px;width:836px;height:657px;background:#eeeeee;"></div>
<div style="left:199px;top:143px;width:836px;height:1px;background:#7a8a99;"></div>
<div style="left:199px;top:143px;width:1px;height:58px;background:#7a8a99;"></div>
<div style="left:1034px;top:143px;width:1px;height:657px;background:#7a8a99;"></div>
<div style="left:200px;top:144px;width:833px;height:1px;background:#a8a8a8;"></div>
<div style="left:201px;top:145px;width:831px;height:1px;background:#ffffff;"></div>
<div style="left:200px;top:144px;width:1px;height:55px;background:#a8a8a8;"></div>
<div style="left:201px;top:145px;width:1px;height:53px;background:#ffffff;"></div>
<div style="left:200px;top:198px;width:10px;height:1px;background:#a8a8a8;"></div>
<div style="left:1029px;top:198px;width:4px;height:1px;background:#a8a8a8;"></div>
<div style="left:200px;top:199px;width:10px;height:1px;background:#ffffff;"></div>
<div style="left:1029px;top:199px;width:5px;height:1px;background:#ffffff;"></div>
<div style="left:1032px;top:144px;width:1px;height:55px;background:#a8a8a8;"></div>
<div style="left:1033px;top:144px;width:1px;height:56px;background:#ffffff;"></div>
<div style="left:201px;top:200px;width:833px;height:1px;background:#7a8a99;"></div>
<div style="left:200px;top:201px;width:834px;height:1px;background:#ffffff;"></div>
<div class="t" style="left:212.7px;top:156px;font-size:10px;line-height:10px;font-weight:bold;color:#222;letter-spacing:0.717px;">Фильтр:</div>
<div style="left:261px;top:149px;width:299px;height:23px;background:#fff;border-top:1px solid #7a8a99;border-left:1px solid #7a8a99;box-sizing:border-box;"></div>
<div style="left:263px;top:171px;width:297px;height:1px;background:#7a8a99;"></div>
<div style="left:559px;top:149px;width:1px;height:23px;background:#7a8a99;"></div>
<div style="left:261px;top:172px;width:300px;height:1px;background:#ffffff;"></div>
<div style="left:563px;top:149px;width:127px;height:24px;border:1px solid #a8a8a8;box-sizing:border-box;box-shadow:inset 1px 1px 0 #fff;"></div>
<div style="left:691px;top:149px;width:72px;height:24px;border:1px solid #a8a8a8;box-sizing:border-box;box-shadow:inset 1px 1px 0 #fff;"></div>
<div class="t" style="left:568.3px;top:157px;font-size:10px;line-height:10px;font-weight:bold;color:#222;letter-spacing:0.792px;">Автообновление</div>
<div class="t" style="left:695.3px;top:157px;font-size:10px;line-height:10px;font-weight:bold;color:#222;letter-spacing:0.643px;">H-scroll</div>
<div style="left:670px;top:155px;width:13px;height:13px;border:1px solid #7a8a99;box-sizing:border-box;background:linear-gradient(#ffffff,#dde7f1 60%,#c9d9ea);"></div>
<div style="left:743px;top:155px;width:13px;height:13px;border:1px solid #7a8a99;box-sizing:border-box;background:linear-gradient(#ffffff,#dde7f1 60%,#c9d9ea);"></div>
<svg style="position:absolute;left:670px;top:155px" width="13" height="13"><rect x="3" y="5" width="2" height="5" fill="#1a1a1a"/><path d="M4.6 9.4 L9.6 3.4" stroke="#1a1a1a" stroke-width="1.4" fill="none"/></svg>
<div class="t" style="left:212.7px;top:182px;font-size:10px;line-height:10px;font-weight:bold;color:#222;letter-spacing:0.825px;">Страница:</div>
<div style="left:276px;top:176px;width:22px;height:22px;border:1px solid #7a8a99;box-sizing:border-box;background:linear-gradient(#f4f8fc,#ffffff 20%,#dde7f1 60%,#c2d4e6);"></div>
<div style="left:346px;top:176px;width:22px;height:22px;border:1px solid #7a8a99;box-sizing:border-box;background:linear-gradient(#f4f8fc,#ffffff 20%,#dde7f1 60%,#c2d4e6);"></div>
<svg style="position:absolute;left:278px;top:178px" width="18" height="18"><defs><linearGradient id="ga" x1="0" y1="0" x2="0" y2="1"><stop offset="0" stop-color="#9ad860"/><stop offset="1" stop-color="#3a8a10"/></linearGradient></defs>
<path d="M1.2 9.2 L10 1.2 V5.6 H16.2 V12.6 H10 V17.2 Z" fill="url(#ga)"/></svg>
<svg style="position:absolute;left:348px;top:178px" width="18" height="18">
<path d="M16.8 9.2 L8 1.2 V5.6 H1.8 V12.6 H8 V17.2 Z" fill="url(#ga)"/></svg>
<div style="left:302px;top:176px;width:39px;height:22px;background:#fff;border-top:1px solid #7a8a99;border-left:1px solid #7a8a99;box-sizing:border-box;"></div>
<div style="left:304px;top:197px;width:37px;height:1px;background:#7a8a99;"></div>
<div style="left:340px;top:176px;width:1px;height:22px;background:#7a8a99;"></div>
<div style="left:302px;top:198px;width:40px;height:1px;background:#ffffff;"></div>
<div class="t" style="left:304.4px;top:180px;font-size:13px;line-height:13px;color:#333;">1</div>
<div class="t" style="left:373.3px;top:182px;font-size:10px;line-height:10px;font-weight:bold;color:#222;letter-spacing:0.864px;">на странице:</div>
<div style="left:453px;top:176px;width:49px;height:22px;background:#fff;border-top:1px solid #7a8a99;border-left:1px solid #7a8a99;box-sizing:border-box;"></div>
<div style="left:455px;top:197px;width:47px;height:1px;background:#7a8a99;"></div>
<div style="left:501px;top:176px;width:1px;height:22px;background:#7a8a99;"></div>
<div style="left:453px;top:198px;width:50px;height:1px;background:#ffffff;"></div>
<div class="t" style="left:455px;top:180px;font-size:13px;line-height:13px;color:#333;letter-spacing:0.500px;">100</div>
<div style="left:507px;top:174px;width:345px;height:26px;border:1px solid #7a8a99;box-sizing:border-box;background:linear-gradient(#f4f8fc,#ffffff 20%,#dde7f1 60%,#c2d4e6);"></div>
<div style="left:532px;top:174px;width:2px;height:26px;background:#7a8a99;"></div>
<div style="left:534px;top:175px;width:1px;height:24px;background:#f4f8fc;"></div>
<div style="left:667px;top:174px;width:2px;height:26px;background:#7a8a99;"></div>
<div style="left:669px;top:175px;width:1px;height:24px;background:#f4f8fc;"></div>
<div style="left:764px;top:174px;width:2px;height:26px;background:#7a8a99;"></div>
<div style="left:766px;top:175px;width:1px;height:24px;background:#f4f8fc;"></div>
<svg style="position:absolute;left:511px;top:179px" width="20" height="18">
<rect x="1.5" y="1.5" width="15" height="14" fill="#fff" stroke="#34497a" stroke-width="1.3"/><rect x="1" y="1" width="16" height="2" fill="#34497a"/>
<path d="M4.5 5 V14" stroke="#117a11" stroke-width="1.2"/><circle cx="4.5" cy="7" r="1.1" fill="#117a11"/><circle cx="4.5" cy="10" r="1.1" fill="#117a11"/><circle cx="4.5" cy="13" r="1.1" fill="#117a11"/>
<path d="M7.5 6 H15 M7.5 9.5 H15 M7.5 13 H15" stroke="#a0a0c0" stroke-width="1.2"/></svg>
<svg style="position:absolute;left:537px;top:179px" width="20" height="18">
<rect x="1.5" y="1.5" width="15" height="13" rx="1.5" fill="#f4f0ea" stroke="#3c8ae0" stroke-width="1.4"/><rect x="1" y="1" width="16" height="2.5" fill="#60a8f0"/>
<path d="M5 7 V5.8 H7 M11 5.8 H13 V7 M13 10 V11.5 H11 M7 11.5 H5 V10" stroke="#0a7a0a" stroke-width="1.7" fill="none"/></svg>
<div class="t" style="left:558.1px;top:181px;font-size:13px;line-height:13px;font-weight:bold;color:#222;letter-spacing:0.608px;">Изменить поля</div>
<svg style="position:absolute;left:673px;top:178px" width="17" height="17"><defs><linearGradient id="gr" x1="0" y1="0" x2="0" y2="1"><stop offset="0" stop-color="#90e070"/><stop offset="1" stop-color="#30a020"/></linearGradient></defs>
<path d="M2 7.5 A6.5 6 0 0 1 13 4 L15 2 V8 H9 L11 6 A4 3.6 0 0 0 5 7.5 Z" fill="url(#gr)"/>
<path d="M15 9 A6.5 6 0 0 1 4 13 L2 15 V9 H8 L6 11 A4 3.6 0 0 0 12 9 Z" fill="url(#gr)"/></svg>
<div class="t" style="left:693.8px;top:181px;font-size:13px;line-height:13px;font-weight:bold;color:#222;letter-spacing:0.143px;">Обновить</div>
<svg style="position:absolute;left:769px;top:177px" width="18" height="19">
<path d="M2.5 8.5 L7 10 L7 18 L2.5 16 Z" fill="#c88a38"/>
<path d="M7 10 L11.5 8.5 L11.5 16 L7 18 Z" fill="#e0aa58"/>
<path d="M2.5 8.5 L7 7 L11.5 8.5 L7 10 Z" fill="#6a4a20"/>
<path d="M6.5 10 Q8 5 12.5 3.5" stroke="#4ab030" stroke-width="2.6" fill="none"/>
<path d="M10.5 0.8 L16 1.2 L14.2 6.5 Z" fill="#4ab030"/>
</svg>
<div class="t" style="left:790.4px;top:181px;font-size:13px;line-height:13px;font-weight:bold;color:#222;letter-spacing:0.333px;">Экспорт</div>
<div class="t" style="left:853px;top:182px;font-size:10px;line-height:10px;font-weight:bold;color:#222;letter-spacing:0.900px;">Записей: 44</div>
<div style="left:199px;top:202px;width:1px;height:598px;background:#7a8a99;"></div>
<div style="left:199px;top:202px;width:836px;height:1px;background:#7a8a99;"></div>
<div style="left:200px;top:203px;width:819px;height:1px;background:#ffffff;"></div>
<div style="left:200px;top:204px;width:818px;height:47px;background:#b5f5a5;"></div>
<div style="left:200px;top:251px;width:818px;height:1px;background:#7a8a99;"></div>
<div style="left:200px;top:203px;width:1px;height:48px;background:#ffffff;"></div>
<div style="left:276px;top:203px;width:1px;height:49px;background:#7a8a99;"></div>
<div style="left:277px;top:204px;width:1px;height:47px;background:#ffffff;"></div>
<div style="left:353px;top:203px;width:1px;height:49px;background:#7a8a99;"></div>
<div style="left:354px;top:204px;width:1px;height:47px;background:#ffffff;"></div>
<div style="left:376px;top:203px;width:1px;height:49px;background:#7a8a99;"></div>
<div style="left:377px;top:204px;width:1px;height:47px;background:#ffffff;"></div>
<div style="left:412px;top:203px;width:1px;height:49px;background:#7a8a99;"></div>
<div style="left:413px;top:204px;width:1px;height:47px;background:#ffffff;"></div>
<div style="left:482px;top:203px;width:1px;height:49px;background:#7a8a99;"></div>
<div style="left:483px;top:204px;width:1px;height:47px;background:#ffffff;"></div>
<div style="left:539px;top:203px;width:1px;height:49px;background:#7a8a99;"></div>
<div style="left:540px;top:204px;width:1px;height:47px;background:#ffffff;"></div>
<div style="left:623px;top:203px;width:1px;height:49px;background:#7a8a99;"></div>
<div style="left:624px;top:204px;width:1px;height:47px;background:#ffffff;"></div>
<div style="left:700px;top:203px;width:1px;height:49px;background:#7a8a99;"></div>
<div style="left:701px;top:204px;width:1px;height:47px;background:#ffffff;"></div>
<div style="left:750px;top:203px;width:1px;height:49px;background:#7a8a99;"></div>
<div style="left:751px;top:204px;width:1px;height:47px;background:#ffffff;"></div>
<div style="left:773px;top:203px;width:1px;height:49px;background:#7a8a99;"></div>
<div style="left:774px;top:204px;width:1px;height:47px;background:#ffffff;"></div>
<div style="left:809px;top:203px;width:1px;height:49px;background:#7a8a99;"></div>
<div style="left:810px;top:204px;width:1px;height:47px;background:#ffffff;"></div>
<div style="left:838px;top:203px;width:1px;height:49px;background:#7a8a99;"></div>
<div style="left:839px;top:204px;width:1px;height:47px;background:#ffffff;"></div>
<div style="left:874px;top:203px;width:1px;height:49px;background:#7a8a99;"></div>
<div style="left:875px;top:204px;width:1px;height:47px;background:#ffffff;"></div>
<div style="left:903px;top:203px;width:1px;height:49px;background:#7a8a99;"></div>
<div style="left:904px;top:204px;width:1px;height:47px;background:#ffffff;"></div>
<div style="left:932px;top:203px;width:1px;height:49px;background:#7a8a99;"></div>
<div style="left:933px;top:204px;width:1px;height:47px;background:#ffffff;"></div>
<div style="left:961px;top:203px;width:1px;height:49px;background:#7a8a99;"></div>
<div style="left:962px;top:204px;width:1px;height:47px;background:#ffffff;"></div>
<div style="left:1018px;top:203px;width:1px;height:49px;background:#7a8a99;"></div>
<div style="left:1019px;top:203px;width:15px;height:49px;background:#eeeeee;"></div>
<div style="left:202px;top:202px;width:74px;height:49px;overflow:hidden"><div class="t" style="left:3.0px;top:19px;font-size:13px;line-height:13px;font-weight:bold;color:#252a30;letter-spacing:0.560px">Device</div></div>
<div style="left:278px;top:202px;width:75px;height:49px;overflow:hidden"><div class="t" style="left:3.5px;top:19px;font-size:13px;line-height:13px;font-weight:bold;color:#252a30;letter-spacing:0.211px">SSID</div></div>
<div style="left:355px;top:202px;width:21px;height:49px;overflow:hidden"><div class="t" style="left:3.3px;top:11px;font-size:13px;line-height:13px;font-weight:bold;color:#252a30;letter-spacing:0.422px">Fre</div><div class="t" style="left:3.3px;top:26px;font-size:13px;line-height:13px;font-weight:bold;color:#252a30;letter-spacing:0.883px">MH</div></div>
<div style="left:378px;top:202px;width:34px;height:49px;overflow:hidden"><div class="t" style="left:2.5px;top:11px;font-size:13px;line-height:13px;font-weight:bold;color:#252a30;letter-spacing:0.508px">User</div><div class="t" style="left:2.5px;top:26px;font-size:13px;line-height:13px;font-weight:bold;color:#252a30;letter-spacing:0.635px">mod</div></div>
<div style="left:414px;top:202px;width:68px;height:49px;overflow:hidden"><div class="t" style="left:3.3px;top:11px;font-size:13px;line-height:13px;font-weight:bold;color:#252a30;letter-spacing:0.557px">Client</div><div class="t" style="left:3.3px;top:26px;font-size:13px;line-height:13px;font-weight:bold;color:#252a30;letter-spacing:0.141px">MAC</div></div>
<div style="left:484px;top:202px;width:55px;height:49px;overflow:hidden"><div class="t" style="left:3.5px;top:11px;font-size:13px;line-height:13px;font-weight:bold;color:#252a30;letter-spacing:0.557px">Client</div><div class="t" style="left:3.5px;top:26px;font-size:13px;line-height:13px;font-weight:bold;color:#252a30;letter-spacing:0.492px">IP</div></div>
<div style="left:541px;top:202px;width:82px;height:49px;overflow:hidden"><div class="t" style="left:3.5px;top:19px;font-size:13px;line-height:13px;font-weight:bold;color:#252a30;letter-spacing:0.508px">User</div></div>
<div style="left:625px;top:202px;width:75px;height:49px;overflow:hidden"><div class="t" style="left:3.3px;top:19px;font-size:13px;line-height:13px;font-weight:bold;color:#252a30;letter-spacing:0.633px">Domain</div></div>
<div style="left:702px;top:202px;width:48px;height:49px;overflow:hidden"><div class="t" style="left:3.0px;top:19px;font-size:13px;line-height:13px;font-weight:bold;color:#252a30;letter-spacing:0.816px">Manuf</div></div>
<div style="left:752px;top:202px;width:21px;height:49px;overflow:hidden"><div class="t" style="left:2.5px;top:19px;font-size:13px;line-height:13px;font-weight:bold;color:#252a30;letter-spacing:0.250px">Au</div></div>
<div style="left:775px;top:202px;width:34px;height:49px;overflow:hidden"><div class="t" style="left:3.5px;top:4px;font-size:13px;line-height:13px;font-weight:bold;color:#252a30;letter-spacing:0.211px">RX</div><div class="t" style="left:3.5px;top:19px;font-size:13px;line-height:13px;font-weight:bold;color:#252a30;letter-spacing:0.553px">(From</div><div class="t" style="left:3.5px;top:34px;font-size:13px;line-height:13px;font-weight:bold;color:#252a30;letter-spacing:0.478px">clien</div></div>
<div style="left:811px;top:202px;width:27px;height:49px;overflow:hidden"><div class="t" style="left:2.5px;top:4px;font-size:13px;line-height:13px;font-weight:bold;color:#252a30;letter-spacing:0.211px">RX</div><div class="t" style="left:2.5px;top:19px;font-size:13px;line-height:13px;font-weight:bold;color:#252a30;letter-spacing:1.008px">rate</div><div class="t" style="left:2.5px;top:34px;font-size:13px;line-height:13px;font-weight:bold;color:#252a30;letter-spacing:0.688px">actu</div></div>
<div style="left:840px;top:202px;width:34px;height:49px;overflow:hidden"><div class="t" style="left:2.5px;top:4px;font-size:13px;line-height:13px;font-weight:bold;color:#252a30;letter-spacing:0.559px">TX (T</div><div class="t" style="left:2.5px;top:19px;font-size:13px;line-height:13px;font-weight:bold;color:#252a30;letter-spacing:0.478px">clien</div><div class="t" style="left:2.5px;top:34px;font-size:13px;line-height:13px;font-weight:bold;color:#252a30;letter-spacing:0.891px">byte</div></div>
<div style="left:876px;top:202px;width:27px;height:49px;overflow:hidden"><div class="t" style="left:2.5px;top:4px;font-size:13px;line-height:13px;font-weight:bold;color:#252a30;letter-spacing:0.414px">TX</div><div class="t" style="left:2.5px;top:19px;font-size:13px;line-height:13px;font-weight:bold;color:#252a30;letter-spacing:1.008px">rate</div><div class="t" style="left:2.5px;top:34px;font-size:13px;line-height:13px;font-weight:bold;color:#252a30;letter-spacing:0.688px">actu</div></div>
<div style="left:905px;top:202px;width:27px;height:49px;overflow:hidden"><div class="t" style="left:2.5px;top:4px;font-size:13px;line-height:13px;font-weight:bold;color:#252a30;letter-spacing:0.156px">Las</div><div class="t" style="left:2.5px;top:19px;font-size:13px;line-height:13px;font-weight:bold;color:#252a30;letter-spacing:-0.250px">RSS</div><div class="t" style="left:2.5px;top:34px;font-size:13px;line-height:13px;font-weight:bold;color:#252a30;letter-spacing:0.448px">dBm</div></div>
<div style="left:934px;top:202px;width:27px;height:49px;overflow:hidden"><div class="t" style="left:2.5px;top:4px;font-size:13px;line-height:13px;font-weight:bold;color:#252a30;letter-spacing:0.156px">Las</div><div class="t" style="left:2.5px;top:19px;font-size:13px;line-height:13px;font-weight:bold;color:#252a30;letter-spacing:0.156px">SNR</div><div class="t" style="left:2.5px;top:34px;font-size:13px;line-height:13px;font-weight:bold;color:#252a30;letter-spacing:0.203px">dB</div></div>
<div style="left:963px;top:202px;width:55px;height:49px;overflow:hidden"><div class="t" style="left:2.5px;top:11px;font-size:13px;line-height:13px;font-weight:bold;color:#252a30;letter-spacing:0.794px">Uptime</div><div class="t" style="left:2.5px;top:26px;font-size:13px;line-height:13px;font-weight:bold;color:#252a30;letter-spacing:0.661px">(dd:hh:</div></div>
<svg style="position:absolute;left:254px;top:223px" width="12" height="8"><path d="M2 6 L6 2 L10 6 Z" fill="#223344"/><rect x="2" y="6" width="9" height="1" fill="#fff"/></svg>
<div style="left:200px;top:252px;width:819px;height:24px;overflow:hidden;background:#ffffff"><div class="t" style="left:2.0px;top:6px;font-size:13px;line-height:13px;color:#2b2b2b;letter-spacing:0.344px">wep2</div><div class="t" style="left:78.1px;top:6px;font-size:13px;line-height:13px;color:#2b2b2b;letter-spacing:0.286px">testssid2...</div><div class="t" style="left:155.6px;top:6px;font-size:13px;line-height:13px;color:#2b2b2b;letter-spacing:0.254px">5...</div><div class="t" style="left:178.3px;top:6px;font-size:13px;line-height:13px;color:#2b2b2b;letter-spacing:0.109px">ac</div><div class="t" style="left:214.3px;top:6px;font-size:13px;line-height:13px;color:#2b2b2b;letter-spacing:0.070px">A8:F9:4B...</div><div class="t" style="left:284.5px;top:6px;font-size:13px;line-height:13px;color:#2b2b2b;letter-spacing:0.293px">130.0....</div><div class="t" style="left:502.0px;top:6px;font-size:13px;line-height:13px;color:#2b2b2b;letter-spacing:0.201px">Eltex ...</div><div class="t" style="left:552.0px;top:6px;font-size:13px;line-height:13px;color:#2b2b2b;letter-spacing:-0.375px">Y...</div><div class="t" style="left:575.5px;top:6px;font-size:13px;line-height:13px;color:#2b2b2b;letter-spacing:0.271px">47,...</div><div class="t" style="left:611.5px;top:6px;font-size:13px;line-height:13px;color:#2b2b2b;letter-spacing:0.406px">0</div><div class="t" style="left:640.5px;top:6px;font-size:13px;line-height:13px;color:#2b2b2b;letter-spacing:0.081px">1,9 G</div><div class="t" style="left:676.5px;top:6px;font-size:13px;line-height:13px;color:#2b2b2b;letter-spacing:0.406px">0</div><div class="t" style="left:723.0px;top:6px;font-size:13px;line-height:13px;color:#2b2b2b;letter-spacing:0.284px">...43</div><div class="t" style="left:764.5px;top:6px;font-size:13px;line-height:13px;color:#2b2b2b;letter-spacing:0.345px">00:16:...</div></div>
<div style="left:200px;top:276px;width:819px;height:24px;overflow:hidden;background:#e0e0e0"><div class="t" style="left:2.0px;top:6px;font-size:13px;line-height:13px;color:#2b2b2b;letter-spacing:0.307px">wop</div><div class="t" style="left:78.1px;top:6px;font-size:13px;line-height:13px;color:#2b2b2b;letter-spacing:0.303px">testssid</div><div class="t" style="left:155.6px;top:6px;font-size:13px;line-height:13px;color:#2b2b2b;letter-spacing:0.254px">5...</div><div class="t" style="left:178.3px;top:6px;font-size:13px;line-height:13px;color:#2b2b2b;letter-spacing:0.109px">ac</div><div class="t" style="left:214.3px;top:6px;font-size:13px;line-height:13px;color:#2b2b2b;letter-spacing:0.070px">A8:F9:4B...</div><div class="t" style="left:284.5px;top:6px;font-size:13px;line-height:13px;color:#2b2b2b;letter-spacing:0.293px">130.0....</div><div class="t" style="left:341.9px;top:6px;font-size:13px;line-height:13px;color:#2b2b2b;letter-spacing:0.351px">79529056...</div><div class="t" style="left:425.0px;top:6px;font-size:13px;line-height:13px;color:#2b2b2b;letter-spacing:0.414px">root</div><div class="t" style="left:502.0px;top:6px;font-size:13px;line-height:13px;color:#2b2b2b;letter-spacing:0.201px">Eltex ...</div><div class="t" style="left:552.0px;top:6px;font-size:13px;line-height:13px;color:#2b2b2b;letter-spacing:-0.375px">Y...</div><div class="t" style="left:575.5px;top:6px;font-size:13px;line-height:13px;color:#2b2b2b;letter-spacing:0.084px">8,1 K</div><div class="t" style="left:611.5px;top:6px;font-size:13px;line-height:13px;color:#2b2b2b;letter-spacing:0.406px">0</div><div class="t" style="left:640.5px;top:6px;font-size:13px;line-height:13px;color:#2b2b2b;letter-spacing:0.084px">5,4 K</div><div class="t" style="left:676.5px;top:6px;font-size:13px;line-height:13px;color:#2b2b2b;letter-spacing:0.406px">0</div><div class="t" style="left:723.0px;top:6px;font-size:13px;line-height:13px;color:#2b2b2b;letter-spacing:0.284px">...28</div><div class="t" style="left:764.5px;top:6px;font-size:13px;line-height:13px;color:#2b2b2b;letter-spacing:0.345px">00:00:...</div></div>
<div style="left:200px;top:300px;width:819px;height:24px;overflow:hidden;background:#ffffff"><div class="t" style="left:2.0px;top:6px;font-size:13px;line-height:13px;color:#2b2b2b;letter-spacing:0.307px">wop</div><div class="t" style="left:78.1px;top:6px;font-size:13px;line-height:13px;color:#2b2b2b;letter-spacing:0.303px">testssid</div><div class="t" style="left:155.6px;top:6px;font-size:13px;line-height:13px;color:#2b2b2b;letter-spacing:0.254px">5...</div><div class="t" style="left:178.3px;top:6px;font-size:13px;line-height:13px;color:#2b2b2b;letter-spacing:0.109px">ac</div><div class="t" style="left:214.3px;top:6px;font-size:13px;line-height:13px;color:#2b2b2b;letter-spacing:0.070px">A8:F9:4B...</div><div class="t" style="left:284.5px;top:6px;font-size:13px;line-height:13px;color:#2b2b2b;letter-spacing:0.293px">130.0....</div><div class="t" style="left:425.0px;top:6px;font-size:13px;line-height:13px;color:#2b2b2b;letter-spacing:0.414px">root</div><div class="t" style="left:502.0px;top:6px;font-size:13px;line-height:13px;color:#2b2b2b;letter-spacing:0.201px">Eltex ...</div><div class="t" style="left:552.0px;top:6px;font-size:13px;line-height:13px;color:#2b2b2b;letter-spacing:-0.375px">Y...</div><div class="t" style="left:575.5px;top:6px;font-size:13px;line-height:13px;color:#2b2b2b;letter-spacing:0.271px">30,...</div><div class="t" style="left:611.5px;top:6px;font-size:13px;line-height:13px;color:#2b2b2b;letter-spacing:0.406px">1</div><div class="t" style="left:640.5px;top:6px;font-size:13px;line-height:13px;color:#2b2b2b;letter-spacing:0.271px">99,...</div><div class="t" style="left:676.5px;top:6px;font-size:13px;line-height:13px;color:#2b2b2b;letter-spacing:0.406px">1</div><div class="t" style="left:723.0px;top:6px;font-size:13px;line-height:13px;color:#2b2b2b;letter-spacing:0.284px">...31</div><div class="t" style="left:764.5px;top:6px;font-size:13px;line-height:13px;color:#2b2b2b;letter-spacing:0.345px">00:00:...</div></div>
<div style="left:200px;top:324px;width:819px;height:24px;overflow:hidden;background:#e0e0e0"><div class="t" style="left:2.0px;top:6px;font-size:13px;line-height:13px;color:#2b2b2b;letter-spacing:0.307px">wop</div><div class="t" style="left:78.1px;top:6px;font-size:13px;line-height:13px;color:#2b2b2b;letter-spacing:0.303px">testssid</div><div class="t" style="left:155.6px;top:6px;font-size:13px;line-height:13px;color:#2b2b2b;letter-spacing:0.254px">5...</div><div class="t" style="left:178.3px;top:6px;font-size:13px;line-height:13px;color:#2b2b2b;letter-spacing:0.109px">ac</div><div class="t" style="left:214.3px;top:6px;font-size:13px;line-height:13px;color:#2b2b2b;letter-spacing:0.070px">A8:F9:4B...</div><div class="t" style="left:284.5px;top:6px;font-size:13px;line-height:13px;color:#2b2b2b;letter-spacing:0.293px">130.0....</div><div class="t" style="left:425.0px;top:6px;font-size:13px;line-height:13px;color:#2b2b2b;letter-spacing:0.414px">root</div><div class="t" style="left:502.0px;top:6px;font-size:13px;line-height:13px;color:#2b2b2b;letter-spacing:0.201px">Eltex ...</div><div class="t" style="left:552.0px;top:6px;font-size:13px;line-height:13px;color:#2b2b2b;letter-spacing:-0.375px">Y...</div><div class="t" style="left:575.5px;top:6px;font-size:13px;line-height:13px;color:#2b2b2b;letter-spacing:0.271px">29,...</div><div class="t" style="left:611.5px;top:6px;font-size:13px;line-height:13px;color:#2b2b2b;letter-spacing:0.406px">1</div><div class="t" style="left:640.5px;top:6px;font-size:13px;line-height:13px;color:#2b2b2b;letter-spacing:0.271px">99,...</div><div class="t" style="left:676.5px;top:6px;font-size:13px;line-height:13px;color:#2b2b2b;letter-spacing:0.406px">1</div><div class="t" style="left:723.0px;top:6px;font-size:13px;line-height:13px;color:#2b2b2b;letter-spacing:0.284px">...43</div><div class="t" style="left:764.5px;top:6px;font-size:13px;line-height:13px;color:#2b2b2b;letter-spacing:0.345px">00:00:...</div></div>
<div style="left:200px;top:348px;width:819px;height:24px;overflow:hidden;background:#ffffff"><div class="t" style="left:2.0px;top:6px;font-size:13px;line-height:13px;color:#2b2b2b;letter-spacing:0.307px">wop</div><div class="t" style="left:78.1px;top:6px;font-size:13px;line-height:13px;color:#2b2b2b;letter-spacing:0.303px">testssid</div><div class="t" style="left:155.6px;top:6px;font-size:13px;line-height:13px;color:#2b2b2b;letter-spacing:0.254px">5...</div><div class="t" style="left:178.3px;top:6px;font-size:13px;line-height:13px;color:#2b2b2b;letter-spacing:0.109px">ac</div><div class="t" style="left:214.3px;top:6px;font-size:13px;line-height:13px;color:#2b2b2b;letter-spacing:0.070px">A8:F9:4B...</div><div class="t" style="left:284.5px;top:6px;font-size:13px;line-height:13px;color:#2b2b2b;letter-spacing:0.293px">130.0....</div><div class="t" style="left:341.9px;top:6px;font-size:13px;line-height:13px;color:#2b2b2b;letter-spacing:0.351px">79529056...</div><div class="t" style="left:425.0px;top:6px;font-size:13px;line-height:13px;color:#2b2b2b;letter-spacing:0.414px">root</div><div class="t" style="left:502.0px;top:6px;font-size:13px;line-height:13px;color:#2b2b2b;letter-spacing:0.201px">Eltex ...</div><div class="t" style="left:552.0px;top:6px;font-size:13px;line-height:13px;color:#2b2b2b;letter-spacing:-0.375px">Y...</div><div class="t" style="left:575.5px;top:6px;font-size:13px;line-height:13px;color:#2b2b2b;letter-spacing:0.084px">3,5 K</div><div class="t" style="left:611.5px;top:6px;font-size:13px;line-height:13px;color:#2b2b2b;letter-spacing:0.406px">0</div><div class="t" style="left:640.5px;top:6px;font-size:13px;line-height:13px;color:#2b2b2b;letter-spacing:0.084px">5,7 K</div><div class="t" style="left:676.5px;top:6px;font-size:13px;line-height:13px;color:#2b2b2b;letter-spacing:0.406px">0</div><div class="t" style="left:723.0px;top:6px;font-size:13px;line-height:13px;color:#2b2b2b;letter-spacing:0.284px">...34</div><div class="t" style="left:764.5px;top:6px;font-size:13px;line-height:13px;color:#2b2b2b;letter-spacing:0.345px">00:00:...</div></div>
<div style="left:200px;top:372px;width:819px;height:24px;overflow:hidden;background:#e0e0e0"><div class="t" style="left:2.0px;top:6px;font-size:13px;line-height:13px;color:#2b2b2b;letter-spacing:0.307px">wop</div><div class="t" style="left:78.1px;top:6px;font-size:13px;line-height:13px;color:#2b2b2b;letter-spacing:0.303px">testssid</div><div class="t" style="left:155.6px;top:6px;font-size:13px;line-height:13px;color:#2b2b2b;letter-spacing:0.254px">5...</div><div class="t" style="left:178.3px;top:6px;font-size:13px;line-height:13px;color:#2b2b2b;letter-spacing:0.109px">ac</div><div class="t" style="left:214.3px;top:6px;font-size:13px;line-height:13px;color:#2b2b2b;letter-spacing:0.070px">A8:F9:4B...</div><div class="t" style="left:284.5px;top:6px;font-size:13px;line-height:13px;color:#2b2b2b;letter-spacing:0.293px">130.0....</div><div class="t" style="left:425.0px;top:6px;font-size:13px;line-height:13px;color:#2b2b2b;letter-spacing:0.414px">root</div><div class="t" style="left:502.0px;top:6px;font-size:13px;line-height:13px;color:#2b2b2b;letter-spacing:0.201px">Eltex ...</div><div class="t" style="left:552.0px;top:6px;font-size:13px;line-height:13px;color:#2b2b2b;letter-spacing:-0.375px">Y...</div><div class="t" style="left:575.5px;top:6px;font-size:13px;line-height:13px;color:#2b2b2b;letter-spacing:0.271px">14,...</div><div class="t" style="left:611.5px;top:6px;font-size:13px;line-height:13px;color:#2b2b2b;letter-spacing:0.406px">1</div><div class="t" style="left:640.5px;top:6px;font-size:13px;line-height:13px;color:#2b2b2b;letter-spacing:0.406px">0</div><div class="t" style="left:676.5px;top:6px;font-size:13px;line-height:13px;color:#2b2b2b;letter-spacing:0.406px">0</div><div class="t" style="left:723.0px;top:6px;font-size:13px;line-height:13px;color:#2b2b2b;letter-spacing:0.284px">...44</div><div class="t" style="left:764.5px;top:6px;font-size:13px;line-height:13px;color:#2b2b2b;letter-spacing:0.345px">00:00:...</div></div>
<div style="left:200px;top:396px;width:819px;height:24px;overflow:hidden;background:#ffffff"><div class="t" style="left:2.0px;top:6px;font-size:13px;line-height:13px;color:#2b2b2b;letter-spacing:0.307px">wop</div><div class="t" style="left:78.1px;top:6px;font-size:13px;line-height:13px;color:#2b2b2b;letter-spacing:0.303px">testssid</div><div class="t" style="left:155.6px;top:6px;font-size:13px;line-height:13px;color:#2b2b2b;letter-spacing:0.254px">5...</div><div class="t" style="left:178.3px;top:6px;font-size:13px;line-height:13px;color:#2b2b2b;letter-spacing:0.109px">ac</div><div class="t" style="left:214.3px;top:6px;font-size:13px;line-height:13px;color:#2b2b2b;letter-spacing:0.070px">A8:F9:4B...</div><div class="t" style="left:284.5px;top:6px;font-size:13px;line-height:13px;color:#2b2b2b;letter-spacing:0.293px">130.0....</div><div class="t" style="left:425.0px;top:6px;font-size:13px;line-height:13px;color:#2b2b2b;letter-spacing:0.414px">root</div><div class="t" style="left:502.0px;top:6px;font-size:13px;line-height:13px;color:#2b2b2b;letter-spacing:0.201px">Eltex ...</div><div class="t" style="left:552.0px;top:6px;font-size:13px;line-height:13px;color:#2b2b2b;letter-spacing:-0.375px">Y...</div><div class="t" style="left:575.5px;top:6px;font-size:13px;line-height:13px;color:#2b2b2b;letter-spacing:0.271px">30,...</div><div class="t" style="left:611.5px;top:6px;font-size:13px;line-height:13px;color:#2b2b2b;letter-spacing:0.406px">1</div><div class="t" style="left:640.5px;top:6px;font-size:13px;line-height:13px;color:#2b2b2b;letter-spacing:0.271px">99,...</div><div class="t" style="left:676.5px;top:6px;font-size:13px;line-height:13px;color:#2b2b2b;letter-spacing:0.406px">1</div><div class="t" style="left:723.0px;top:6px;font-size:13px;line-height:13px;color:#2b2b2b;letter-spacing:0.284px">...35</div><div class="t" style="left:764.5px;top:6px;font-size:13px;line-height:13px;color:#2b2b2b;letter-spacing:0.345px">00:00:...</div></div>
<div style="left:200px;top:420px;width:819px;height:24px;overflow:hidden;background:#e0e0e0"><div class="t" style="left:2.0px;top:6px;font-size:13px;line-height:13px;color:#2b2b2b;letter-spacing:0.307px">wop</div><div class="t" style="left:78.1px;top:6px;font-size:13px;line-height:13px;color:#2b2b2b;letter-spacing:0.303px">testssid</div><div class="t" style="left:155.6px;top:6px;font-size:13px;line-height:13px;color:#2b2b2b;letter-spacing:0.254px">5...</div><div class="t" style="left:178.3px;top:6px;font-size:13px;line-height:13px;color:#2b2b2b;letter-spacing:0.109px">ac</div><div class="t" style="left:214.3px;top:6px;font-size:13px;line-height:13px;color:#2b2b2b;letter-spacing:0.070px">A8:F9:4B...</div><div class="t" style="left:284.5px;top:6px;font-size:13px;line-height:13px;color:#2b2b2b;letter-spacing:0.293px">130.0....</div><div class="t" style="left:425.0px;top:6px;font-size:13px;line-height:13px;color:#2b2b2b;letter-spacing:0.414px">root</div><div class="t" style="left:502.0px;top:6px;font-size:13px;line-height:13px;color:#2b2b2b;letter-spacing:0.201px">Eltex ...</div><div class="t" style="left:552.0px;top:6px;font-size:13px;line-height:13px;color:#2b2b2b;letter-spacing:-0.375px">Y...</div><div class="t" style="left:575.5px;top:6px;font-size:13px;line-height:13px;color:#2b2b2b;letter-spacing:0.271px">29,...</div><div class="t" style="left:611.5px;top:6px;font-size:13px;line-height:13px;color:#2b2b2b;letter-spacing:0.406px">1</div><div class="t" style="left:640.5px;top:6px;font-size:13px;line-height:13px;color:#2b2b2b;letter-spacing:0.271px">99,...</div><div class="t" style="left:676.5px;top:6px;font-size:13px;line-height:13px;color:#2b2b2b;letter-spacing:0.406px">1</div><div class="t" style="left:723.0px;top:6px;font-size:13px;line-height:13px;color:#2b2b2b;letter-spacing:0.284px">...36</div><div class="t" style="left:764.5px;top:6px;font-size:13px;line-height:13px;color:#2b2b2b;letter-spacing:0.345px">00:00:...</div></div>
<div style="left:200px;top:444px;width:819px;height:24px;overflow:hidden;background:#ffffff"><div class="t" style="left:2.0px;top:6px;font-size:13px;line-height:13px;color:#2b2b2b;letter-spacing:0.307px">wop</div><div class="t" style="left:78.1px;top:6px;font-size:13px;line-height:13px;color:#2b2b2b;letter-spacing:0.303px">testssid</div><div class="t" style="left:155.6px;top:6px;font-size:13px;line-height:13px;color:#2b2b2b;letter-spacing:0.254px">5...</div><div class="t" style="left:178.3px;top:6px;font-size:13px;line-height:13px;color:#2b2b2b;letter-spacing:0.109px">ac</div><div class="t" style="left:214.3px;top:6px;font-size:13px;line-height:13px;color:#2b2b2b;letter-spacing:0.070px">A8:F9:4B...</div><div class="t" style="left:284.5px;top:6px;font-size:13px;line-height:13px;color:#2b2b2b;letter-spacing:0.293px">130.0....</div><div class="t" style="left:341.9px;top:6px;font-size:13px;line-height:13px;color:#2b2b2b;letter-spacing:0.351px">79529056...</div><div class="t" style="left:425.0px;top:6px;font-size:13px;line-height:13px;color:#2b2b2b;letter-spacing:0.414px">root</div><div class="t" style="left:502.0px;top:6px;font-size:13px;line-height:13px;color:#2b2b2b;letter-spacing:0.201px">Eltex ...</div><div class="t" style="left:552.0px;top:6px;font-size:13px;line-height:13px;color:#2b2b2b;letter-spacing:-0.375px">Y...</div><div class="t" style="left:575.5px;top:6px;font-size:13px;line-height:13px;color:#2b2b2b;letter-spacing:0.084px">3,6 K</div><div class="t" style="left:611.5px;top:6px;font-size:13px;line-height:13px;color:#2b2b2b;letter-spacing:0.406px">0</div><div class="t" style="left:640.5px;top:6px;font-size:13px;line-height:13px;color:#2b2b2b;letter-spacing:0.084px">5,8 K</div><div class="t" style="left:676.5px;top:6px;font-size:13px;line-height:13px;color:#2b2b2b;letter-spacing:0.406px">0</div><div class="t" style="left:723.0px;top:6px;font-size:13px;line-height:13px;color:#2b2b2b;letter-spacing:0.284px">...34</div><div class="t" style="left:764.5px;top:6px;font-size:13px;line-height:13px;color:#2b2b2b;letter-spacing:0.345px">00:00:...</div></div>
<div style="left:200px;top:468px;width:819px;height:24px;overflow:hidden;background:#e0e0e0"><div class="t" style="left:2.0px;top:6px;font-size:13px;line-height:13px;color:#2b2b2b;letter-spacing:0.307px">wop</div><div class="t" style="left:78.1px;top:6px;font-size:13px;line-height:13px;color:#2b2b2b;letter-spacing:0.303px">testssid</div><div class="t" style="left:155.6px;top:6px;font-size:13px;line-height:13px;color:#2b2b2b;letter-spacing:0.254px">5...</div><div class="t" style="left:178.3px;top:6px;font-size:13px;line-height:13px;color:#2b2b2b;letter-spacing:0.109px">ac</div><div class="t" style="left:214.3px;top:6px;font-size:13px;line-height:13px;color:#2b2b2b;letter-spacing:0.070px">A8:F9:4B...</div><div class="t" style="left:284.5px;top:6px;font-size:13px;line-height:13px;color:#2b2b2b;letter-spacing:0.293px">130.0....</div><div class="t" style="left:341.9px;top:6px;font-size:13px;line-height:13px;color:#2b2b2b;letter-spacing:0.351px">79529056...</div><div class="t" style="left:425.0px;top:6px;font-size:13px;line-height:13px;color:#2b2b2b;letter-spacing:0.414px">root</div><div class="t" style="left:502.0px;top:6px;font-size:13px;line-height:13px;color:#2b2b2b;letter-spacing:0.201px">Eltex ...</div><div class="t" style="left:552.0px;top:6px;font-size:13px;line-height:13px;color:#2b2b2b;letter-spacing:-0.375px">Y...</div><div class="t" style="left:575.5px;top:6px;font-size:13px;line-height:13px;color:#2b2b2b;letter-spacing:0.084px">3,4 K</div><div class="t" style="left:611.5px;top:6px;font-size:13px;line-height:13px;color:#2b2b2b;letter-spacing:0.406px">0</div><div class="t" style="left:640.5px;top:6px;font-size:13px;line-height:13px;color:#2b2b2b;letter-spacing:0.084px">5,7 K</div><div class="t" style="left:676.5px;top:6px;font-size:13px;line-height:13px;color:#2b2b2b;letter-spacing:0.406px">0</div><div class="t" style="left:723.0px;top:6px;font-size:13px;line-height:13px;color:#2b2b2b;letter-spacing:0.284px">...39</div><div class="t" style="left:764.5px;top:6px;font-size:13px;line-height:13px;color:#2b2b2b;letter-spacing:0.345px">00:00:...</div></div>
<div style="left:200px;top:492px;width:819px;height:24px;overflow:hidden;background:#ffffff"><div class="t" style="left:2.0px;top:6px;font-size:13px;line-height:13px;color:#2b2b2b;letter-spacing:0.307px">wop</div><div class="t" style="left:78.1px;top:6px;font-size:13px;line-height:13px;color:#2b2b2b;letter-spacing:0.303px">testssid</div><div class="t" style="left:155.6px;top:6px;font-size:13px;line-height:13px;color:#2b2b2b;letter-spacing:0.254px">5...</div><div class="t" style="left:178.3px;top:6px;font-size:13px;line-height:13px;color:#2b2b2b;letter-spacing:0.109px">ac</div><div class="t" style="left:214.3px;top:6px;font-size:13px;line-height:13px;color:#2b2b2b;letter-spacing:0.070px">A8:F9:4B...</div><div class="t" style="left:284.5px;top:6px;font-size:13px;line-height:13px;color:#2b2b2b;letter-spacing:0.293px">130.0....</div><div class="t" style="left:425.0px;top:6px;font-size:13px;line-height:13px;color:#2b2b2b;letter-spacing:0.414px">root</div><div class="t" style="left:502.0px;top:6px;font-size:13px;line-height:13px;color:#2b2b2b;letter-spacing:0.201px">Eltex ...</div><div class="t" style="left:552.0px;top:6px;font-size:13px;line-height:13px;color:#2b2b2b;letter-spacing:-0.375px">Y...</div><div class="t" style="left:575.5px;top:6px;font-size:13px;line-height:13px;color:#2b2b2b;letter-spacing:0.271px">30,...</div><div class="t" style="left:611.5px;top:6px;font-size:13px;line-height:13px;color:#2b2b2b;letter-spacing:0.406px">1</div><div class="t" style="left:640.5px;top:6px;font-size:13px;line-height:13px;color:#2b2b2b;letter-spacing:0.284px">10...</div><div class="t" style="left:676.5px;top:6px;font-size:13px;line-height:13px;color:#2b2b2b;letter-spacing:0.406px">1</div><div class="t" style="left:723.0px;top:6px;font-size:13px;line-height:13px;color:#2b2b2b;letter-spacing:0.284px">...43</div><div class="t" style="left:764.5px;top:6px;font-size:13px;line-height:13px;color:#2b2b2b;letter-spacing:0.345px">00:00:...</div></div>
<div style="left:200px;top:516px;width:819px;height:24px;overflow:hidden;background:#e0e0e0"><div class="t" style="left:2.0px;top:6px;font-size:13px;line-height:13px;color:#2b2b2b;letter-spacing:0.307px">wop</div><div class="t" style="left:78.1px;top:6px;font-size:13px;line-height:13px;color:#2b2b2b;letter-spacing:0.303px">testssid</div><div class="t" style="left:155.6px;top:6px;font-size:13px;line-height:13px;color:#2b2b2b;letter-spacing:0.254px">5...</div><div class="t" style="left:178.3px;top:6px;font-size:13px;line-height:13px;color:#2b2b2b;letter-spacing:0.109px">ac</div><div class="t" style="left:214.3px;top:6px;font-size:13px;line-height:13px;color:#2b2b2b;letter-spacing:0.070px">A8:F9:4B...</div><div class="t" style="left:284.5px;top:6px;font-size:13px;line-height:13px;color:#2b2b2b;letter-spacing:0.293px">130.0....</div><div class="t" style="left:425.0px;top:6px;font-size:13px;line-height:13px;color:#2b2b2b;letter-spacing:0.414px">root</div><div class="t" style="left:502.0px;top:6px;font-size:13px;line-height:13px;color:#2b2b2b;letter-spacing:0.201px">Eltex ...</div><div class="t" style="left:552.0px;top:6px;font-size:13px;line-height:13px;color:#2b2b2b;letter-spacing:-0.375px">Y...</div><div class="t" style="left:575.5px;top:6px;font-size:13px;line-height:13px;color:#2b2b2b;letter-spacing:0.271px">31,...</div><div class="t" style="left:611.5px;top:6px;font-size:13px;line-height:13px;color:#2b2b2b;letter-spacing:0.406px">1</div><div class="t" style="left:640.5px;top:6px;font-size:13px;line-height:13px;color:#2b2b2b;letter-spacing:0.284px">10...</div><div class="t" style="left:676.5px;top:6px;font-size:13px;line-height:13px;color:#2b2b2b;letter-spacing:0.406px">1</div><div class="t" style="left:723.0px;top:6px;font-size:13px;line-height:13px;color:#2b2b2b;letter-spacing:0.284px">...36</div><div class="t" style="left:764.5px;top:6px;font-size:13px;line-height:13px;color:#2b2b2b;letter-spacing:0.345px">00:00:...</div></div>
<div style="left:200px;top:540px;width:819px;height:24px;overflow:hidden;background:#ffffff"><div class="t" style="left:2.0px;top:6px;font-size:13px;line-height:13px;color:#2b2b2b;letter-spacing:0.307px">wop</div><div class="t" style="left:78.1px;top:6px;font-size:13px;line-height:13px;color:#2b2b2b;letter-spacing:0.303px">testssid</div><div class="t" style="left:155.6px;top:6px;font-size:13px;line-height:13px;color:#2b2b2b;letter-spacing:0.254px">5...</div><div class="t" style="left:178.3px;top:6px;font-size:13px;line-height:13px;color:#2b2b2b;letter-spacing:0.109px">ac</div><div class="t" style="left:214.3px;top:6px;font-size:13px;line-height:13px;color:#2b2b2b;letter-spacing:0.070px">A8:F9:4B...</div><div class="t" style="left:284.5px;top:6px;font-size:13px;line-height:13px;color:#2b2b2b;letter-spacing:0.293px">130.0....</div><div class="t" style="left:425.0px;top:6px;font-size:13px;line-height:13px;color:#2b2b2b;letter-spacing:0.414px">root</div><div class="t" style="left:502.0px;top:6px;font-size:13px;line-height:13px;color:#2b2b2b;letter-spacing:0.201px">Eltex ...</div><div class="t" style="left:552.0px;top:6px;font-size:13px;line-height:13px;color:#2b2b2b;letter-spacing:-0.375px">Y...</div><div class="t" style="left:575.5px;top:6px;font-size:13px;line-height:13px;color:#2b2b2b;letter-spacing:0.271px">29,...</div><div class="t" style="left:611.5px;top:6px;font-size:13px;line-height:13px;color:#2b2b2b;letter-spacing:0.406px">1</div><div class="t" style="left:640.5px;top:6px;font-size:13px;line-height:13px;color:#2b2b2b;letter-spacing:0.271px">99,...</div><div class="t" style="left:676.5px;top:6px;font-size:13px;line-height:13px;color:#2b2b2b;letter-spacing:0.406px">1</div><div class="t" style="left:723.0px;top:6px;font-size:13px;line-height:13px;color:#2b2b2b;letter-spacing:0.284px">...20</div><div class="t" style="left:764.5px;top:6px;font-size:13px;line-height:13px;color:#2b2b2b;letter-spacing:0.345px">00:00:...</div></div>
<div style="left:200px;top:564px;width:819px;height:24px;overflow:hidden;background:#e0e0e0"><div class="t" style="left:2.0px;top:6px;font-size:13px;line-height:13px;color:#2b2b2b;letter-spacing:0.307px">wop</div><div class="t" style="left:78.1px;top:6px;font-size:13px;line-height:13px;color:#2b2b2b;letter-spacing:0.303px">testssid</div><div class="t" style="left:155.6px;top:6px;font-size:13px;line-height:13px;color:#2b2b2b;letter-spacing:0.254px">5...</div><div class="t" style="left:178.3px;top:6px;font-size:13px;line-height:13px;color:#2b2b2b;letter-spacing:0.109px">ac</div><div class="t" style="left:214.3px;top:6px;font-size:13px;line-height:13px;color:#2b2b2b;letter-spacing:0.070px">A8:F9:4B...</div><div class="t" style="left:284.5px;top:6px;font-size:13px;line-height:13px;color:#2b2b2b;letter-spacing:0.293px">130.0....</div><div class="t" style="left:425.0px;top:6px;font-size:13px;line-height:13px;color:#2b2b2b;letter-spacing:0.414px">root</div><div class="t" style="left:502.0px;top:6px;font-size:13px;line-height:13px;color:#2b2b2b;letter-spacing:0.201px">Eltex ...</div><div class="t" style="left:552.0px;top:6px;font-size:13px;line-height:13px;color:#2b2b2b;letter-spacing:-0.375px">Y...</div><div class="t" style="left:575.5px;top:6px;font-size:13px;line-height:13px;color:#2b2b2b;letter-spacing:0.271px">30,...</div><div class="t" style="left:611.5px;top:6px;font-size:13px;line-height:13px;color:#2b2b2b;letter-spacing:0.406px">1</div><div class="t" style="left:640.5px;top:6px;font-size:13px;line-height:13px;color:#2b2b2b;letter-spacing:0.271px">99,...</div><div class="t" style="left:676.5px;top:6px;font-size:13px;line-height:13px;color:#2b2b2b;letter-spacing:0.406px">1</div><div class="t" style="left:723.0px;top:6px;font-size:13px;line-height:13px;color:#2b2b2b;letter-spacing:0.284px">...37</div><div class="t" style="left:764.5px;top:6px;font-size:13px;line-height:13px;color:#2b2b2b;letter-spacing:0.345px">00:00:...</div></div>
<div style="left:200px;top:588px;width:819px;height:24px;overflow:hidden;background:#ffffff"><div class="t" style="left:2.0px;top:6px;font-size:13px;line-height:13px;color:#2b2b2b;letter-spacing:0.307px">wop</div><div class="t" style="left:78.1px;top:6px;font-size:13px;line-height:13px;color:#2b2b2b;letter-spacing:0.303px">testssid</div><div class="t" style="left:155.6px;top:6px;font-size:13px;line-height:13px;color:#2b2b2b;letter-spacing:0.254px">5...</div><div class="t" style="left:178.3px;top:6px;font-size:13px;line-height:13px;color:#2b2b2b;letter-spacing:0.109px">ac</div><div class="t" style="left:214.3px;top:6px;font-size:13px;line-height:13px;color:#2b2b2b;letter-spacing:0.070px">A8:F9:4B...</div><div class="t" style="left:284.5px;top:6px;font-size:13px;line-height:13px;color:#2b2b2b;letter-spacing:0.293px">130.0....</div><div class="t" style="left:341.9px;top:6px;font-size:13px;line-height:13px;color:#2b2b2b;letter-spacing:0.351px">79529056...</div><div class="t" style="left:425.0px;top:6px;font-size:13px;line-height:13px;color:#2b2b2b;letter-spacing:0.414px">root</div><div class="t" style="left:502.0px;top:6px;font-size:13px;line-height:13px;color:#2b2b2b;letter-spacing:0.201px">Eltex ...</div><div class="t" style="left:552.0px;top:6px;font-size:13px;line-height:13px;color:#2b2b2b;letter-spacing:-0.375px">Y...</div><div class="t" style="left:575.5px;top:6px;font-size:13px;line-height:13px;color:#2b2b2b;letter-spacing:0.084px">5,5 K</div><div class="t" style="left:611.5px;top:6px;font-size:13px;line-height:13px;color:#2b2b2b;letter-spacing:0.406px">0</div><div class="t" style="left:640.5px;top:6px;font-size:13px;line-height:13px;color:#2b2b2b;letter-spacing:0.084px">9,7 K</div><div class="t" style="left:676.5px;top:6px;font-size:13px;line-height:13px;color:#2b2b2b;letter-spacing:0.406px">0</div><div class="t" style="left:723.0px;top:6px;font-size:13px;line-height:13px;color:#2b2b2b;letter-spacing:0.284px">...30</div><div class="t" style="left:764.5px;top:6px;font-size:13px;line-height:13px;color:#2b2b2b;letter-spacing:0.345px">00:00:...</div></div>
<div style="left:200px;top:612px;width:819px;height:24px;overflow:hidden;background:#e0e0e0"><div class="t" style="left:2.0px;top:6px;font-size:13px;line-height:13px;color:#2b2b2b;letter-spacing:0.307px">wop</div><div class="t" style="left:78.1px;top:6px;font-size:13px;line-height:13px;color:#2b2b2b;letter-spacing:0.303px">testssid</div><div class="t" style="left:155.6px;top:6px;font-size:13px;line-height:13px;color:#2b2b2b;letter-spacing:0.254px">5...</div><div class="t" style="left:178.3px;top:6px;font-size:13px;line-height:13px;color:#2b2b2b;letter-spacing:0.109px">ac</div><div class="t" style="left:214.3px;top:6px;font-size:13px;line-height:13px;color:#2b2b2b;letter-spacing:0.070px">A8:F9:4B...</div><div class="t" style="left:284.5px;top:6px;font-size:13px;line-height:13px;color:#2b2b2b;letter-spacing:0.293px">130.0....</div><div class="t" style="left:425.0px;top:6px;font-size:13px;line-height:13px;color:#2b2b2b;letter-spacing:0.414px">root</div><div class="t" style="left:502.0px;top:6px;font-size:13px;line-height:13px;color:#2b2b2b;letter-spacing:0.201px">Eltex ...</div><div class="t" style="left:552.0px;top:6px;font-size:13px;line-height:13px;color:#2b2b2b;letter-spacing:-0.375px">Y...</div><div class="t" style="left:575.5px;top:6px;font-size:13px;line-height:13px;color:#2b2b2b;letter-spacing:0.271px">30,...</div><div class="t" style="left:611.5px;top:6px;font-size:13px;line-height:13px;color:#2b2b2b;letter-spacing:0.406px">1</div><div class="t" style="left:640.5px;top:6px;font-size:13px;line-height:13px;color:#2b2b2b;letter-spacing:0.284px">10...</div><div class="t" style="left:676.5px;top:6px;font-size:13px;line-height:13px;color:#2b2b2b;letter-spacing:0.406px">1</div><div class="t" style="left:723.0px;top:6px;font-size:13px;line-height:13px;color:#2b2b2b;letter-spacing:0.284px">...36</div><div class="t" style="left:764.5px;top:6px;font-size:13px;line-height:13px;color:#2b2b2b;letter-spacing:0.345px">00:00:...</div></div>
<div style="left:200px;top:636px;width:819px;height:24px;overflow:hidden;background:#ffffff"><div class="t" style="left:2.0px;top:6px;font-size:13px;line-height:13px;color:#2b2b2b;letter-spacing:0.307px">wop</div><div class="t" style="left:78.1px;top:6px;font-size:13px;line-height:13px;color:#2b2b2b;letter-spacing:0.303px">testssid</div><div class="t" style="left:155.6px;top:6px;font-size:13px;line-height:13px;color:#2b2b2b;letter-spacing:0.254px">5...</div><div class="t" style="left:178.3px;top:6px;font-size:13px;line-height:13px;color:#2b2b2b;letter-spacing:0.109px">ac</div><div class="t" style="left:214.3px;top:6px;font-size:13px;line-height:13px;color:#2b2b2b;letter-spacing:0.070px">A8:F9:4B...</div><div class="t" style="left:284.5px;top:6px;font-size:13px;line-height:13px;color:#2b2b2b;letter-spacing:0.293px">130.0....</div><div class="t" style="left:425.0px;top:6px;font-size:13px;line-height:13px;color:#2b2b2b;letter-spacing:0.414px">root</div><div class="t" style="left:502.0px;top:6px;font-size:13px;line-height:13px;color:#2b2b2b;letter-spacing:0.201px">Eltex ...</div><div class="t" style="left:552.0px;top:6px;font-size:13px;line-height:13px;color:#2b2b2b;letter-spacing:-0.375px">Y...</div><div class="t" style="left:575.5px;top:6px;font-size:13px;line-height:13px;color:#2b2b2b;letter-spacing:0.271px">29,...</div><div class="t" style="left:611.5px;top:6px;font-size:13px;line-height:13px;color:#2b2b2b;letter-spacing:0.406px">1</div><div class="t" style="left:640.5px;top:6px;font-size:13px;line-height:13px;color:#2b2b2b;letter-spacing:0.271px">99,...</div><div class="t" style="left:676.5px;top:6px;font-size:13px;line-height:13px;color:#2b2b2b;letter-spacing:0.406px">1</div><div class="t" style="left:723.0px;top:6px;font-size:13px;line-height:13px;color:#2b2b2b;letter-spacing:0.284px">...28</div><div class="t" style="left:764.5px;top:6px;font-size:13px;line-height:13px;color:#2b2b2b;letter-spacing:0.345px">00:00:...</div></div>
<div style="left:200px;top:660px;width:819px;height:24px;overflow:hidden;background:#e0e0e0"><div class="t" style="left:2.0px;top:6px;font-size:13px;line-height:13px;color:#2b2b2b;letter-spacing:0.307px">wop</div><div class="t" style="left:78.1px;top:6px;font-size:13px;line-height:13px;color:#2b2b2b;letter-spacing:0.303px">testssid</div><div class="t" style="left:155.6px;top:6px;font-size:13px;line-height:13px;color:#2b2b2b;letter-spacing:0.254px">5...</div><div class="t" style="left:178.3px;top:6px;font-size:13px;line-height:13px;color:#2b2b2b;letter-spacing:0.109px">ac</div><div class="t" style="left:214.3px;top:6px;font-size:13px;line-height:13px;color:#2b2b2b;letter-spacing:0.070px">A8:F9:4B...</div><div class="t" style="left:284.5px;top:6px;font-size:13px;line-height:13px;color:#2b2b2b;letter-spacing:0.293px">130.0....</div><div class="t" style="left:341.9px;top:6px;font-size:13px;line-height:13px;color:#2b2b2b;letter-spacing:0.351px">79529056...</div><div class="t" style="left:425.0px;top:6px;font-size:13px;line-height:13px;color:#2b2b2b;letter-spacing:0.414px">root</div><div class="t" style="left:502.0px;top:6px;font-size:13px;line-height:13px;color:#2b2b2b;letter-spacing:0.201px">Eltex ...</div><div class="t" style="left:552.0px;top:6px;font-size:13px;line-height:13px;color:#2b2b2b;letter-spacing:-0.375px">Y...</div><div class="t" style="left:575.5px;top:6px;font-size:13px;line-height:13px;color:#2b2b2b;letter-spacing:0.084px">3,5 K</div><div class="t" style="left:611.5px;top:6px;font-size:13px;line-height:13px;color:#2b2b2b;letter-spacing:0.406px">0</div><div class="t" style="left:640.5px;top:6px;font-size:13px;line-height:13px;color:#2b2b2b;letter-spacing:0.084px">5,7 K</div><div class="t" style="left:676.5px;top:6px;font-size:13px;line-height:13px;color:#2b2b2b;letter-spacing:0.406px">0</div><div class="t" style="left:723.0px;top:6px;font-size:13px;line-height:13px;color:#2b2b2b;letter-spacing:0.284px">...34</div><div class="t" style="left:764.5px;top:6px;font-size:13px;line-height:13px;color:#2b2b2b;letter-spacing:0.345px">00:00:...</div></div>
<div style="left:200px;top:684px;width:819px;height:24px;overflow:hidden;background:#ffffff"><div class="t" style="left:2.0px;top:6px;font-size:13px;line-height:13px;color:#2b2b2b;letter-spacing:0.307px">wop</div><div class="t" style="left:78.1px;top:6px;font-size:13px;line-height:13px;color:#2b2b2b;letter-spacing:0.303px">testssid</div><div class="t" style="left:155.6px;top:6px;font-size:13px;line-height:13px;color:#2b2b2b;letter-spacing:0.254px">5...</div><div class="t" style="left:178.3px;top:6px;font-size:13px;line-height:13px;color:#2b2b2b;letter-spacing:0.109px">ac</div><div class="t" style="left:214.3px;top:6px;font-size:13px;line-height:13px;color:#2b2b2b;letter-spacing:0.070px">A8:F9:4B...</div><div class="t" style="left:284.5px;top:6px;font-size:13px;line-height:13px;color:#2b2b2b;letter-spacing:0.293px">130.0....</div><div class="t" style="left:341.9px;top:6px;font-size:13px;line-height:13px;color:#2b2b2b;letter-spacing:0.351px">79529056...</div><div class="t" style="left:425.0px;top:6px;font-size:13px;line-height:13px;color:#2b2b2b;letter-spacing:0.414px">root</div><div class="t" style="left:502.0px;top:6px;font-size:13px;line-height:13px;color:#2b2b2b;letter-spacing:0.201px">Eltex ...</div><div class="t" style="left:552.0px;top:6px;font-size:13px;line-height:13px;color:#2b2b2b;letter-spacing:-0.375px">Y...</div><div class="t" style="left:575.5px;top:6px;font-size:13px;line-height:13px;color:#2b2b2b;letter-spacing:0.084px">3,4 K</div><div class="t" style="left:611.5px;top:6px;font-size:13px;line-height:13px;color:#2b2b2b;letter-spacing:0.406px">0</div><div class="t" style="left:640.5px;top:6px;font-size:13px;line-height:13px;color:#2b2b2b;letter-spacing:0.084px">5,7 K</div><div class="t" style="left:676.5px;top:6px;font-size:13px;line-height:13px;color:#2b2b2b;letter-spacing:0.406px">0</div><div class="t" style="left:723.0px;top:6px;font-size:13px;line-height:13px;color:#2b2b2b;letter-spacing:0.284px">...34</div><div class="t" style="left:764.5px;top:6px;font-size:13px;line-height:13px;color:#2b2b2b;letter-spacing:0.345px">00:00:...</div></div>
<div style="left:200px;top:708px;width:819px;height:24px;overflow:hidden;background:#e0e0e0"><div class="t" style="left:2.0px;top:6px;font-size:13px;line-height:13px;color:#2b2b2b;letter-spacing:0.307px">wop</div><div class="t" style="left:78.1px;top:6px;font-size:13px;line-height:13px;color:#2b2b2b;letter-spacing:0.303px">testssid</div><div class="t" style="left:155.6px;top:6px;font-size:13px;line-height:13px;color:#2b2b2b;letter-spacing:0.254px">5...</div><div class="t" style="left:178.3px;top:6px;font-size:13px;line-height:13px;color:#2b2b2b;letter-spacing:0.109px">ac</div><div class="t" style="left:214.3px;top:6px;font-size:13px;line-height:13px;color:#2b2b2b;letter-spacing:0.070px">A8:F9:4B...</div><div class="t" style="left:284.5px;top:6px;font-size:13px;line-height:13px;color:#2b2b2b;letter-spacing:0.293px">130.0....</div><div class="t" style="left:341.9px;top:6px;font-size:13px;line-height:13px;color:#2b2b2b;letter-spacing:0.351px">79529056...</div><div class="t" style="left:425.0px;top:6px;font-size:13px;line-height:13px;color:#2b2b2b;letter-spacing:0.414px">root</div><div class="t" style="left:502.0px;top:6px;font-size:13px;line-height:13px;color:#2b2b2b;letter-spacing:0.201px">Eltex ...</div><div class="t" style="left:552.0px;top:6px;font-size:13px;line-height:13px;color:#2b2b2b;letter-spacing:-0.375px">Y...</div><div class="t" style="left:575.5px;top:6px;font-size:13px;line-height:13px;color:#2b2b2b;letter-spacing:0.084px">3,4 K</div><div class="t" style="left:611.5px;top:6px;font-size:13px;line-height:13px;color:#2b2b2b;letter-spacing:0.406px">0</div><div class="t" style="left:640.5px;top:6px;font-size:13px;line-height:13px;color:#2b2b2b;letter-spacing:0.084px">5,6 K</div><div class="t" style="left:676.5px;top:6px;font-size:13px;line-height:13px;color:#2b2b2b;letter-spacing:0.406px">0</div><div class="t" style="left:723.0px;top:6px;font-size:13px;line-height:13px;color:#2b2b2b;letter-spacing:0.284px">...32</div><div class="t" style="left:764.5px;top:6px;font-size:13px;line-height:13px;color:#2b2b2b;letter-spacing:0.345px">00:00:...</div></div>
<div style="left:200px;top:732px;width:819px;height:24px;overflow:hidden;background:#ffffff"><div class="t" style="left:2.0px;top:6px;font-size:13px;line-height:13px;color:#2b2b2b;letter-spacing:0.307px">wop</div><div class="t" style="left:78.1px;top:6px;font-size:13px;line-height:13px;color:#2b2b2b;letter-spacing:0.303px">testssid</div><div class="t" style="left:155.6px;top:6px;font-size:13px;line-height:13px;color:#2b2b2b;letter-spacing:0.254px">5...</div><div class="t" style="left:178.3px;top:6px;font-size:13px;line-height:13px;color:#2b2b2b;letter-spacing:0.109px">ac</div><div class="t" style="left:214.3px;top:6px;font-size:13px;line-height:13px;color:#2b2b2b;letter-spacing:0.070px">A8:F9:4B...</div><div class="t" style="left:284.5px;top:6px;font-size:13px;line-height:13px;color:#2b2b2b;letter-spacing:0.293px">130.0....</div><div class="t" style="left:341.9px;top:6px;font-size:13px;line-height:13px;color:#2b2b2b;letter-spacing:0.351px">79529056...</div><div class="t" style="left:425.0px;top:6px;font-size:13px;line-height:13px;color:#2b2b2b;letter-spacing:0.414px">root</div><div class="t" style="left:502.0px;top:6px;font-size:13px;line-height:13px;color:#2b2b2b;letter-spacing:0.201px">Eltex ...</div><div class="t" style="left:552.0px;top:6px;font-size:13px;line-height:13px;color:#2b2b2b;letter-spacing:-0.375px">Y...</div><div class="t" style="left:575.5px;top:6px;font-size:13px;line-height:13px;color:#2b2b2b;letter-spacing:0.084px">3,5 K</div><div class="t" style="left:611.5px;top:6px;font-size:13px;line-height:13px;color:#2b2b2b;letter-spacing:0.406px">0</div><div class="t" style="left:640.5px;top:6px;font-size:13px;line-height:13px;color:#2b2b2b;letter-spacing:0.084px">5,7 K</div><div class="t" style="left:676.5px;top:6px;font-size:13px;line-height:13px;color:#2b2b2b;letter-spacing:0.406px">0</div><div class="t" style="left:723.0px;top:6px;font-size:13px;line-height:13px;color:#2b2b2b;letter-spacing:0.284px">...29</div><div class="t" style="left:764.5px;top:6px;font-size:13px;line-height:13px;color:#2b2b2b;letter-spacing:0.345px">00:00:...</div></div>
<div style="left:200px;top:756px;width:819px;height:24px;overflow:hidden;background:#e0e0e0"><div class="t" style="left:2.0px;top:6px;font-size:13px;line-height:13px;color:#2b2b2b;letter-spacing:0.307px">wop</div><div class="t" style="left:78.1px;top:6px;font-size:13px;line-height:13px;color:#2b2b2b;letter-spacing:0.303px">testssid</div><div class="t" style="left:155.6px;top:6px;font-size:13px;line-height:13px;color:#2b2b2b;letter-spacing:0.254px">5...</div><div class="t" style="left:178.3px;top:6px;font-size:13px;line-height:13px;color:#2b2b2b;letter-spacing:0.109px">ac</div><div class="t" style="left:214.3px;top:6px;font-size:13px;line-height:13px;color:#2b2b2b;letter-spacing:0.070px">A8:F9:4B...</div><div class="t" style="left:284.5px;top:6px;font-size:13px;line-height:13px;color:#2b2b2b;letter-spacing:0.293px">130.0....</div><div class="t" style="left:425.0px;top:6px;font-size:13px;line-height:13px;color:#2b2b2b;letter-spacing:0.414px">root</div><div class="t" style="left:502.0px;top:6px;font-size:13px;line-height:13px;color:#2b2b2b;letter-spacing:0.201px">Eltex ...</div><div class="t" style="left:552.0px;top:6px;font-size:13px;line-height:13px;color:#2b2b2b;letter-spacing:-0.375px">Y...</div><div class="t" style="left:575.5px;top:6px;font-size:13px;line-height:13px;color:#2b2b2b;letter-spacing:0.271px">31,...</div><div class="t" style="left:611.5px;top:6px;font-size:13px;line-height:13px;color:#2b2b2b;letter-spacing:0.406px">1</div><div class="t" style="left:640.5px;top:6px;font-size:13px;line-height:13px;color:#2b2b2b;letter-spacing:0.284px">10...</div><div class="t" style="left:676.5px;top:6px;font-size:13px;line-height:13px;color:#2b2b2b;letter-spacing:0.406px">1</div><div class="t" style="left:723.0px;top:6px;font-size:13px;line-height:13px;color:#2b2b2b;letter-spacing:0.284px">...40</div><div class="t" style="left:764.5px;top:6px;font-size:13px;line-height:13px;color:#2b2b2b;letter-spacing:0.345px">00:00:...</div></div>
<div style="left:200px;top:780px;width:819px;height:19px;overflow:hidden;background:#ffffff"><div class="t" style="left:2.0px;top:6px;font-size:13px;line-height:13px;color:#2b2b2b;letter-spacing:0.307px">wop</div><div class="t" style="left:78.1px;top:6px;font-size:13px;line-height:13px;color:#2b2b2b;letter-spacing:0.303px">testssid</div><div class="t" style="left:155.6px;top:6px;font-size:13px;line-height:13px;color:#2b2b2b;letter-spacing:0.254px">5...</div><div class="t" style="left:178.3px;top:6px;font-size:13px;line-height:13px;color:#2b2b2b;letter-spacing:0.109px">ac</div><div class="t" style="left:214.3px;top:6px;font-size:13px;line-height:13px;color:#2b2b2b;letter-spacing:0.070px">A8:F9:4B...</div><div class="t" style="left:284.5px;top:6px;font-size:13px;line-height:13px;color:#2b2b2b;letter-spacing:0.293px">130.0....</div><div class="t" style="left:425.0px;top:6px;font-size:13px;line-height:13px;color:#2b2b2b;letter-spacing:0.414px">root</div><div class="t" style="left:502.0px;top:6px;font-size:13px;line-height:13px;color:#2b2b2b;letter-spacing:0.201px">Eltex ...</div><div class="t" style="left:552.0px;top:6px;font-size:13px;line-height:13px;color:#2b2b2b;letter-spacing:-0.375px">Y...</div><div class="t" style="left:575.5px;top:6px;font-size:13px;line-height:13px;color:#2b2b2b;letter-spacing:0.271px">29,...</div><div class="t" style="left:611.5px;top:6px;font-size:13px;line-height:13px;color:#2b2b2b;letter-spacing:0.406px">0</div><div class="t" style="left:640.5px;top:6px;font-size:13px;line-height:13px;color:#2b2b2b;letter-spacing:0.271px">98,...</div><div class="t" style="left:676.5px;top:6px;font-size:13px;line-height:13px;color:#2b2b2b;letter-spacing:0.406px">1</div><div class="t" style="left:723.0px;top:6px;font-size:13px;line-height:13px;color:#2b2b2b;letter-spacing:0.284px">...38</div><div class="t" style="left:764.5px;top:6px;font-size:13px;line-height:13px;color:#2b2b2b;letter-spacing:0.345px">00:00:...</div></div>
<svg style="position:absolute;left:0;top:0;" width="1058" height="800"><rect x="904" y="267" width="2" height="4" fill="#0055ff"/><rect x="907" y="264" width="3" height="7" fill="#0055ff"/><rect x="911" y="261" width="3" height="10" fill="#0055ff"/><rect x="915" y="258" width="3" height="13" fill="#0055ff"/><rect x="904" y="291" width="2" height="4" fill="#0055ff"/><rect x="907" y="288" width="3" height="7" fill="#0055ff"/><rect x="911" y="285" width="3" height="10" fill="#0055ff"/><rect x="915.5" y="282.5" width="2" height="12" fill="#fff" stroke="#7a7a7a" stroke-width="1"/><rect x="904" y="315" width="2" height="4" fill="#0055ff"/><rect x="907" y="312" width="3" height="7" fill="#0055ff"/><rect x="911" y="309" width="3" height="10" fill="#0055ff"/><rect x="915.5" y="306.5" width="2" height="12" fill="#fff" stroke="#7a7a7a" stroke-width="1"/><rect x="904" y="339" width="2" height="4" fill="#0055ff"/><rect x="907" y="336" width="3" height="7" fill="#0055ff"/><rect x="911" y="333" width="3" height="10" fill="#0055ff"/><rect x="915" y="330" width="3" height="13" fill="#0055ff"/><rect x="904" y="363" width="2" height="4" fill="#0055ff"/><rect x="907" y="360" width="3" height="7" fill="#0055ff"/><rect x="911" y="357" width="3" height="10" fill="#0055ff"/><rect x="915" y="354" width="3" height="13" fill="#0055ff"/><rect x="904" y="387" width="2" height="4" fill="#0055ff"/><rect x="907" y="384" width="3" height="7" fill="#0055ff"/><rect x="911" y="381" width="3" height="10" fill="#0055ff"/><rect x="915" y="378" width="3" height="13" fill="#0055ff"/><rect x="904" y="411" width="2" height="4" fill="#0055ff"/><rect x="907" y="408" width="3" height="7" fill="#0055ff"/><rect x="911" y="405" width="3" height="10" fill="#0055ff"/><rect x="915" y="402" width="3" height="13" fill="#0055ff"/><rect x="904" y="435" width="2" height="4" fill="#0055ff"/><rect x="907" y="432" width="3" height="7" fill="#0055ff"/><rect x="911" y="429" width="3" height="10" fill="#0055ff"/><rect x="915" y="426" width="3" height="13" fill="#0055ff"/><rect x="904" y="459" width="2" height="4" fill="#0055ff"/><rect x="907" y="456" width="3" height="7" fill="#0055ff"/><rect x="911" y="453" width="3" height="10" fill="#0055ff"/><rect x="915" y="450" width="3" height="13" fill="#0055ff"/><rect x="904" y="483" width="2" height="4" fill="#0055ff"/><rect x="907" y="480" width="3" height="7" fill="#0055ff"/><rect x="911" y="477" width="3" height="10" fill="#0055ff"/><rect x="915" y="474" width="3" height="13" fill="#0055ff"/><rect x="904" y="507" width="2" height="4" fill="#0055ff"/><rect x="907" y="504" width="3" height="7" fill="#0055ff"/><rect x="911" y="501" width="3" height="10" fill="#0055ff"/><rect x="915" y="498" width="3" height="13" fill="#0055ff"/><rect x="904" y="531" width="2" height="4" fill="#0055ff"/><rect x="907" y="528" width="3" height="7" fill="#0055ff"/><rect x="911" y="525" width="3" height="10" fill="#0055ff"/><rect x="915" y="522" width="3" height="13" fill="#0055ff"/><rect x="904" y="555" width="2" height="4" fill="#0055ff"/><rect x="907" y="552" width="3" height="7" fill="#0055ff"/><rect x="911.5" y="549.5" width="2" height="9" fill="#fff" stroke="#7a7a7a" stroke-width="1"/><rect x="915.5" y="546.5" width="2" height="12" fill="#fff" stroke="#7a7a7a" stroke-width="1"/><rect x="904" y="579" width="2" height="4" fill="#0055ff"/><rect x="907" y="576" width="3" height="7" fill="#0055ff"/><rect x="911" y="573" width="3" height="10" fill="#0055ff"/><rect x="915" y="570" width="3" height="13" fill="#0055ff"/><rect x="904" y="603" width="2" height="4" fill="#0055ff"/><rect x="907" y="600" width="3" height="7" fill="#0055ff"/><rect x="911" y="597" width="3" height="10" fill="#0055ff"/><rect x="915.5" y="594.5" width="2" height="12" fill="#fff" stroke="#7a7a7a" stroke-width="1"/><rect x="904" y="627" width="2" height="4" fill="#0055ff"/><rect x="907" y="624" width="3" height="7" fill="#0055ff"/><rect x="911" y="621" width="3" height="10" fill="#0055ff"/><rect x="915" y="618" width="3" height="13" fill="#0055ff"/><rect x="904" y="651" width="2" height="4" fill="#0055ff"/><rect x="907" y="648" width="3" height="7" fill="#0055ff"/><rect x="911" y="645" width="3" height="10" fill="#0055ff"/><rect x="915.5" y="642.5" width="2" height="12" fill="#fff" stroke="#7a7a7a" stroke-width="1"/><rect x="904" y="675" width="2" height="4" fill="#0055ff"/><rect x="907" y="672" width="3" height="7" fill="#0055ff"/><rect x="911" y="669" width="3" height="10" fill="#0055ff"/><rect x="915" y="666" width="3" height="13" fill="#0055ff"/><rect x="904" y="699" width="2" height="4" fill="#0055ff"/><rect x="907" y="696" width="3" height="7" fill="#0055ff"/><rect x="911" y="693" width="3" height="10" fill="#0055ff"/><rect x="915" y="690" width="3" height="13" fill="#0055ff"/><rect x="904" y="723" width="2" height="4" fill="#0055ff"/><rect x="907" y="720" width="3" height="7" fill="#0055ff"/><rect x="911" y="717" width="3" height="10" fill="#0055ff"/><rect x="915.5" y="714.5" width="2" height="12" fill="#fff" stroke="#7a7a7a" stroke-width="1"/><rect x="904" y="747" width="2" height="4" fill="#0055ff"/><rect x="907" y="744" width="3" height="7" fill="#0055ff"/><rect x="911" y="741" width="3" height="10" fill="#0055ff"/><rect x="915.5" y="738.5" width="2" height="12" fill="#fff" stroke="#7a7a7a" stroke-width="1"/><rect x="904" y="771" width="2" height="4" fill="#0055ff"/><rect x="907" y="768" width="3" height="7" fill="#0055ff"/><rect x="911" y="765" width="3" height="10" fill="#0055ff"/><rect x="915" y="762" width="3" height="13" fill="#0055ff"/><rect x="904" y="795" width="2" height="4" fill="#0055ff"/><rect x="907" y="792" width="3" height="7" fill="#0055ff"/><rect x="911" y="789" width="3" height="10" fill="#0055ff"/><rect x="915" y="786" width="3" height="13" fill="#0055ff"/></svg>
<div style="left:1019px;top:252px;width:15px;height:547px;background:#eeeeee;border-left:1px solid #7a8a99;box-sizing:border-box;"></div>
<div style="left:1020px;top:252px;width:1px;height:547px;background:#c8dcf0;"></div>
<div style="left:1020px;top:252px;width:14px;height:15px;background:#eeeeee;box-shadow:inset 1px 1px 0 #fff;"></div>
<svg style="position:absolute;left:1020px;top:252px" width="14" height="16"><path d="M2.5 8.5 L7 4 L11.5 8.5 Z" fill="#222"/></svg>
<div style="left:1019px;top:267px;width:15px;height:267px;border:1px solid #5b7fc6;border-right:none;box-sizing:border-box;background:linear-gradient(90deg,#dde8f4,#fbfdff 30%,#d6e3f0 60%,#c0d4e8);"></div>
<div style="left:1023px;top:398px;width:9px;height:1px;background:#5b7fc6;"></div>
<div style="left:1023px;top:400px;width:9px;height:1px;background:#5b7fc6;"></div>
<div style="left:1023px;top:402px;width:9px;height:1px;background:#5b7fc6;"></div>
<div style="left:1020px;top:783px;width:14px;height:16px;background:#eeeeee;border-top:1px solid #7a8a99;box-sizing:border-box;"></div>
<svg style="position:absolute;left:1020px;top:783px" width="14" height="16"><path d="M2.5 6.5 L7 11 L11.5 6.5 Z" fill="#222"/></svg>
<div style="left:199px;top:799px;width:836px;height:1px;background:#7a8a99;"></div>
<div style="left:192px;top:814px;width:863px;height:1px;background:#ffffff;"></div>
<svg style="position:absolute;left:0;top:0" width="1058" height="859"><g fill="#6a7a8a"><rect x="205" y="820" width="1" height="1"/><rect x="207" y="818" width="1" height="1"/><rect x="209" y="820" width="1" height="1"/><rect x="211" y="818" width="1" height="1"/><rect x="213" y="820" width="1" height="1"/><rect x="215" y="818" width="1" height="1"/><rect x="217" y="820" width="1" height="1"/><rect x="219" y="818" width="1" height="1"/><rect x="221" y="820" width="1" height="1"/><rect x="223" y="818" width="1" height="1"/><rect x="225" y="820" width="1" height="1"/><rect x="227" y="818" width="1" height="1"/><rect x="229" y="820" width="1" height="1"/><rect x="231" y="818" width="1" height="1"/><rect x="233" y="820" width="1" height="1"/><rect x="235" y="818" width="1" height="1"/><rect x="237" y="820" width="1" height="1"/><rect x="239" y="818" width="1" height="1"/><rect x="241" y="820" width="1" height="1"/><rect x="243" y="818" width="1" height="1"/><rect x="245" y="820" width="1" height="1"/><rect x="247" y="818" width="1" height="1"/><rect x="249" y="820" width="1" height="1"/><rect x="251" y="818" width="1" height="1"/><rect x="253" y="820" width="1" height="1"/><rect x="255" y="818" width="1" height="1"/><rect x="257" y="820" width="1" height="1"/><rect x="259" y="818" width="1" height="1"/><rect x="261" y="820" width="1" height="1"/><rect x="263" y="818" width="1" height="1"/><rect x="265" y="820" width="1" height="1"/><rect x="267" y="818" width="1" height="1"/><rect x="269" y="820" width="1" height="1"/><rect x="271" y="818" width="1" height="1"/><rect x="273" y="820" width="1" height="1"/><rect x="275" y="818" width="1" height="1"/><rect x="277" y="820" width="1" height="1"/><rect x="279" y="818" width="1" height="1"/><rect x="281" y="820" width="1" height="1"/><rect x="283" y="818" width="1" height="1"/><rect x="285" y="820" width="1" height="1"/><rect x="287" y="818" width="1" height="1"/><rect x="289" y="820" width="1" height="1"/><rect x="291" y="818" width="1" height="1"/><rect x="293" y="820" width="1" height="1"/><rect x="295" y="818" width="1" height="1"/><rect x="297" y="820" width="1" height="1"/><rect x="299" y="818" width="1" height="1"/><rect x="301" y="820" width="1" height="1"/><rect x="303" y="818" width="1" height="1"/><rect x="305" y="820" width="1" height="1"/><rect x="307" y="818" width="1" height="1"/><rect x="309" y="820" width="1" height="1"/><rect x="311" y="818" width="1" height="1"/><rect x="313" y="820" width="1" height="1"/><rect x="315" y="818" width="1" height="1"/><rect x="317" y="820" width="1" height="1"/><rect x="319" y="818" width="1" height="1"/><rect x="321" y="820" width="1" height="1"/><rect x="323" y="818" width="1" height="1"/><rect x="325" y="820" width="1" height="1"/><rect x="327" y="818" width="1" height="1"/><rect x="329" y="820" width="1" height="1"/><rect x="331" y="818" width="1" height="1"/><rect x="333" y="820" width="1" height="1"/><rect x="335" y="818" width="1" height="1"/><rect x="337" y="820" width="1" height="1"/><rect x="339" y="818" width="1" height="1"/><rect x="341" y="820" width="1" height="1"/><rect x="343" y="818" width="1" height="1"/><rect x="345" y="820" width="1" height="1"/><rect x="347" y="818" width="1" height="1"/><rect x="349" y="820" width="1" height="1"/><rect x="351" y="818" width="1" height="1"/><rect x="353" y="820" width="1" height="1"/><rect x="355" y="818" width="1" height="1"/><rect x="357" y="820" width="1" height="1"/><rect x="359" y="818" width="1" height="1"/><rect x="361" y="820" width="1" height="1"/><rect x="363" y="818" width="1" height="1"/><rect x="365" y="820" width="1" height="1"/><rect x="367" y="818" width="1" height="1"/><rect x="369" y="820" width="1" height="1"/><rect x="371" y="818" width="1" height="1"/><rect x="373" y="820" width="1" height="1"/><rect x="375" y="818" width="1" height="1"/><rect x="377" y="820" width="1" height="1"/><rect x="379" y="818" width="1" height="1"/><rect x="381" y="820" width="1" height="1"/><rect x="383" y="818" width="1" height="1"/><rect x="385" y="820" width="1" height="1"/><rect x="387" y="818" width="1" height="1"/><rect x="389" y="820" width="1" height="1"/><rect x="391" y="818" width="1" height="1"/><rect x="393" y="820" width="1" height="1"/><rect x="395" y="818" width="1" height="1"/><rect x="397" y="820" width="1" height="1"/><rect x="399" y="818" width="1" height="1"/><rect x="401" y="820" width="1" height="1"/><rect x="403" y="818" width="1" height="1"/><rect x="405" y="820" width="1" height="1"/><rect x="407" y="818" width="1" height="1"/><rect x="409" y="820" width="1" height="1"/><rect x="411" y="818" width="1" height="1"/><rect x="413" y="820" width="1" height="1"/><rect x="415" y="818" width="1" height="1"/><rect x="417" y="820" width="1" height="1"/><rect x="419" y="818" width="1" height="1"/><rect x="421" y="820" width="1" height="1"/><rect x="423" y="818" width="1" height="1"/><rect x="425" y="820" width="1" height="1"/><rect x="427" y="818" width="1" height="1"/><rect x="429" y="820" width="1" height="1"/><rect x="431" y="818" width="1" height="1"/><rect x="433" y="820" width="1" height="1"/><rect x="435" y="818" width="1" height="1"/><rect x="437" y="820" width="1" height="1"/><rect x="439" y="818" width="1" height="1"/><rect x="441" y="820" width="1" height="1"/><rect x="443" y="818" width="1" height="1"/><rect x="445" y="820" width="1" height="1"/><rect x="447" y="818" width="1" height="1"/><rect x="449" y="820" width="1" height="1"/><rect x="451" y="818" width="1" height="1"/><rect x="453" y="820" width="1" height="1"/><rect x="455" y="818" width="1" height="1"/><rect x="457" y="820" width="1" height="1"/><rect x="459" y="818" width="1" height="1"/><rect x="461" y="820" width="1" height="1"/><rect x="463" y="818" width="1" height="1"/><rect x="465" y="820" width="1" height="1"/><rect x="467" y="818" width="1" height="1"/><rect x="469" y="820" width="1" height="1"/><rect x="471" y="818" width="1" height="1"/><rect x="473" y="820" width="1" height="1"/><rect x="475" y="818" width="1" height="1"/><rect x="477" y="820" width="1" height="1"/><rect x="479" y="818" width="1" height="1"/><rect x="481" y="820" width="1" height="1"/><rect x="483" y="818" width="1" height="1"/><rect x="485" y="820" width="1" height="1"/><rect x="487" y="818" width="1" height="1"/><rect x="489" y="820" width="1" height="1"/><rect x="491" y="818" width="1" height="1"/><rect x="493" y="820" width="1" height="1"/><rect x="495" y="818" width="1" height="1"/><rect x="497" y="820" width="1" height="1"/><rect x="499" y="818" width="1" height="1"/><rect x="501" y="820" width="1" height="1"/><rect x="503" y="818" width="1" height="1"/><rect x="505" y="820" width="1" height="1"/><rect x="507" y="818" width="1" height="1"/><rect x="509" y="820" width="1" height="1"/><rect x="511" y="818" width="1" height="1"/><rect x="513" y="820" width="1" height="1"/><rect x="515" y="818" width="1" height="1"/><rect x="517" y="820" width="1" height="1"/><rect x="519" y="818" width="1" height="1"/><rect x="521" y="820" width="1" height="1"/><rect x="523" y="818" width="1" height="1"/><rect x="525" y="820" width="1" height="1"/><rect x="527" y="818" width="1" height="1"/><rect x="529" y="820" width="1" height="1"/><rect x="531" y="818" width="1" height="1"/><rect x="533" y="820" width="1" height="1"/><rect x="535" y="818" width="1" height="1"/><rect x="537" y="820" width="1" height="1"/><rect x="539" y="818" width="1" height="1"/><rect x="541" y="820" width="1" height="1"/><rect x="543" y="818" width="1" height="1"/><rect x="545" y="820" width="1" height="1"/><rect x="547" y="818" width="1" height="1"/><rect x="549" y="820" width="1" height="1"/><rect x="551" y="818" width="1" height="1"/><rect x="553" y="820" width="1" height="1"/><rect x="555" y="818" width="1" height="1"/><rect x="557" y="820" width="1" height="1"/><rect x="559" y="818" width="1" height="1"/><rect x="561" y="820" width="1" height="1"/><rect x="563" y="818" width="1" height="1"/><rect x="565" y="820" width="1" height="1"/><rect x="567" y="818" width="1" height="1"/><rect x="569" y="820" width="1" height="1"/><rect x="571" y="818" width="1" height="1"/><rect x="573" y="820" width="1" height="1"/><rect x="575" y="818" width="1" height="1"/><rect x="577" y="820" width="1" height="1"/><rect x="579" y="818" width="1" height="1"/><rect x="581" y="820" width="1" height="1"/><rect x="583" y="818" width="1" height="1"/><rect x="585" y="820" width="1" height="1"/><rect x="587" y="818" width="1" height="1"/><rect x="589" y="820" width="1" height="1"/><rect x="591" y="818" width="1" height="1"/><rect x="593" y="820" width="1" height="1"/><rect x="595" y="818" width="1" height="1"/><rect x="597" y="820" width="1" height="1"/><rect x="599" y="818" width="1" height="1"/><rect x="601" y="820" width="1" height="1"/><rect x="603" y="818" width="1" height="1"/><rect x="605" y="820" width="1" height="1"/><rect x="607" y="818" width="1" height="1"/><rect x="609" y="820" width="1" height="1"/><rect x="611" y="818" width="1" height="1"/><rect x="613" y="820" width="1" height="1"/><rect x="615" y="818" width="1" height="1"/><rect x="617" y="820" width="1" height="1"/><rect x="619" y="818" width="1" height="1"/><rect x="621" y="820" width="1" height="1"/><rect x="623" y="818" width="1" height="1"/><rect x="625" y="820" width="1" height="1"/><rect x="627" y="818" width="1" height="1"/><rect x="629" y="820" width="1" height="1"/><rect x="631" y="818" width="1" height="1"/><rect x="633" y="820" width="1" height="1"/><rect x="635" y="818" width="1" height="1"/><rect x="637" y="820" width="1" height="1"/><rect x="639" y="818" width="1" height="1"/><rect x="641" y="820" width="1" height="1"/><rect x="643" y="818" width="1" height="1"/><rect x="645" y="820" width="1" height="1"/><rect x="647" y="818" width="1" height="1"/><rect x="649" y="820" width="1" height="1"/><rect x="651" y="818" width="1" height="1"/><rect x="653" y="820" width="1" height="1"/><rect x="655" y="818" width="1" height="1"/><rect x="657" y="820" width="1" height="1"/><rect x="659" y="818" width="1" height="1"/><rect x="661" y="820" width="1" height="1"/><rect x="663" y="818" width="1" height="1"/><rect x="665" y="820" width="1" height="1"/><rect x="667" y="818" width="1" height="1"/><rect x="669" y="820" width="1" height="1"/><rect x="671" y="818" width="1" height="1"/><rect x="673" y="820" width="1" height="1"/><rect x="675" y="818" width="1" height="1"/><rect x="677" y="820" width="1" height="1"/><rect x="679" y="818" width="1" height="1"/><rect x="681" y="820" width="1" height="1"/><rect x="683" y="818" width="1" height="1"/><rect x="685" y="820" width="1" height="1"/><rect x="687" y="818" width="1" height="1"/><rect x="689" y="820" width="1" height="1"/><rect x="691" y="818" width="1" height="1"/><rect x="693" y="820" width="1" height="1"/><rect x="695" y="818" width="1" height="1"/><rect x="697" y="820" width="1" height="1"/><rect x="699" y="818" width="1" height="1"/><rect x="701" y="820" width="1" height="1"/><rect x="703" y="818" width="1" height="1"/><rect x="705" y="820" width="1" height="1"/><rect x="707" y="818" width="1" height="1"/><rect x="709" y="820" width="1" height="1"/><rect x="711" y="818" width="1" height="1"/><rect x="713" y="820" width="1" height="1"/><rect x="715" y="818" width="1" height="1"/><rect x="717" y="820" width="1" height="1"/><rect x="719" y="818" width="1" height="1"/><rect x="721" y="820" width="1" height="1"/><rect x="723" y="818" width="1" height="1"/><rect x="725" y="820" width="1" height="1"/><rect x="727" y="818" width="1" height="1"/><rect x="729" y="820" width="1" height="1"/><rect x="731" y="818" width="1" height="1"/><rect x="733" y="820" width="1" height="1"/><rect x="735" y="818" width="1" height="1"/><rect x="737" y="820" width="1" height="1"/><rect x="739" y="818" width="1" height="1"/><rect x="741" y="820" width="1" height="1"/><rect x="743" y="818" width="1" height="1"/><rect x="745" y="820" width="1" height="1"/><rect x="747" y="818" width="1" height="1"/><rect x="749" y="820" width="1" height="1"/><rect x="751" y="818" width="1" height="1"/><rect x="753" y="820" width="1" height="1"/><rect x="755" y="818" width="1" height="1"/><rect x="757" y="820" width="1" height="1"/><rect x="759" y="818" width="1" height="1"/><rect x="761" y="820" width="1" height="1"/><rect x="763" y="818" width="1" height="1"/><rect x="765" y="820" width="1" height="1"/><rect x="767" y="818" width="1" height="1"/><rect x="769" y="820" width="1" height="1"/><rect x="771" y="818" width="1" height="1"/><rect x="773" y="820" width="1" height="1"/><rect x="775" y="818" width="1" height="1"/><rect x="777" y="820" width="1" height="1"/><rect x="779" y="818" width="1" height="1"/><rect x="781" y="820" width="1" height="1"/><rect x="783" y="818" width="1" height="1"/><rect x="785" y="820" width="1" height="1"/><rect x="787" y="818" width="1" height="1"/><rect x="789" y="820" width="1" height="1"/><rect x="791" y="818" width="1" height="1"/><rect x="793" y="820" width="1" height="1"/><rect x="795" y="818" width="1" height="1"/><rect x="797" y="820" width="1" height="1"/><rect x="799" y="818" width="1" height="1"/><rect x="801" y="820" width="1" height="1"/><rect x="803" y="818" width="1" height="1"/><rect x="805" y="820" width="1" height="1"/><rect x="807" y="818" width="1" height="1"/><rect x="809" y="820" width="1" height="1"/><rect x="811" y="818" width="1" height="1"/><rect x="813" y="820" width="1" height="1"/><rect x="815" y="818" width="1" height="1"/><rect x="817" y="820" width="1" height="1"/><rect x="819" y="818" width="1" height="1"/><rect x="821" y="820" width="1" height="1"/><rect x="823" y="818" width="1" height="1"/><rect x="825" y="820" width="1" height="1"/><rect x="827" y="818" width="1" height="1"/><rect x="829" y="820" width="1" height="1"/><rect x="831" y="818" width="1" height="1"/><rect x="833" y="820" width="1" height="1"/><rect x="835" y="818" width="1" height="1"/><rect x="837" y="820" width="1" height="1"/><rect x="839" y="818" width="1" height="1"/><rect x="841" y="820" width="1" height="1"/><rect x="843" y="818" width="1" height="1"/><rect x="845" y="820" width="1" height="1"/><rect x="847" y="818" width="1" height="1"/><rect x="849" y="820" width="1" height="1"/><rect x="851" y="818" width="1" height="1"/><rect x="853" y="820" width="1" height="1"/><rect x="855" y="818" width="1" height="1"/><rect x="857" y="820" width="1" height="1"/><rect x="859" y="818" width="1" height="1"/><rect x="861" y="820" width="1" height="1"/><rect x="863" y="818" width="1" height="1"/><rect x="865" y="820" width="1" height="1"/><rect x="867" y="818" width="1" height="1"/><rect x="869" y="820" width="1" height="1"/><rect x="871" y="818" width="1" height="1"/><rect x="873" y="820" width="1" height="1"/><rect x="875" y="818" width="1" height="1"/><rect x="877" y="820" width="1" height="1"/><rect x="879" y="818" width="1" height="1"/><rect x="881" y="820" width="1" height="1"/><rect x="883" y="818" width="1" height="1"/><rect x="885" y="820" width="1" height="1"/><rect x="887" y="818" width="1" height="1"/><rect x="889" y="820" width="1" height="1"/><rect x="891" y="818" width="1" height="1"/><rect x="893" y="820" width="1" height="1"/><rect x="895" y="818" width="1" height="1"/><rect x="897" y="820" width="1" height="1"/><rect x="899" y="818" width="1" height="1"/><rect x="901" y="820" width="1" height="1"/><rect x="903" y="818" width="1" height="1"/><rect x="905" y="820" width="1" height="1"/><rect x="907" y="818" width="1" height="1"/><rect x="909" y="820" width="1" height="1"/><rect x="911" y="818" width="1" height="1"/><rect x="913" y="820" width="1" height="1"/><rect x="915" y="818" width="1" height="1"/><rect x="917" y="820" width="1" height="1"/><rect x="919" y="818" width="1" height="1"/><rect x="921" y="820" width="1" height="1"/><rect x="923" y="818" width="1" height="1"/><rect x="925" y="820" width="1" height="1"/><rect x="927" y="818" width="1" height="1"/><rect x="929" y="820" width="1" height="1"/><rect x="931" y="818" width="1" height="1"/><rect x="933" y="820" width="1" height="1"/><rect x="935" y="818" width="1" height="1"/><rect x="937" y="820" width="1" height="1"/><rect x="939" y="818" width="1" height="1"/><rect x="941" y="820" width="1" height="1"/><rect x="943" y="818" width="1" height="1"/><rect x="945" y="820" width="1" height="1"/><rect x="947" y="818" width="1" height="1"/><rect x="949" y="820" width="1" height="1"/><rect x="951" y="818" width="1" height="1"/><rect x="953" y="820" width="1" height="1"/><rect x="955" y="818" width="1" height="1"/><rect x="957" y="820" width="1" height="1"/><rect x="959" y="818" width="1" height="1"/><rect x="961" y="820" width="1" height="1"/><rect x="963" y="818" width="1" height="1"/><rect x="965" y="820" width="1" height="1"/><rect x="967" y="818" width="1" height="1"/><rect x="969" y="820" width="1" height="1"/><rect x="971" y="818" width="1" height="1"/><rect x="973" y="820" width="1" height="1"/><rect x="975" y="818" width="1" height="1"/><rect x="977" y="820" width="1" height="1"/><rect x="979" y="818" width="1" height="1"/><rect x="981" y="820" width="1" height="1"/><rect x="983" y="818" width="1" height="1"/><rect x="985" y="820" width="1" height="1"/><rect x="987" y="818" width="1" height="1"/><rect x="989" y="820" width="1" height="1"/><rect x="991" y="818" width="1" height="1"/><rect x="993" y="820" width="1" height="1"/><rect x="995" y="818" width="1" height="1"/><rect x="997" y="820" width="1" height="1"/><rect x="999" y="818" width="1" height="1"/><rect x="1001" y="820" width="1" height="1"/><rect x="1003" y="818" width="1" height="1"/><rect x="1005" y="820" width="1" height="1"/><rect x="1007" y="818" width="1" height="1"/><rect x="1009" y="820" width="1" height="1"/><rect x="1011" y="818" width="1" height="1"/><rect x="1013" y="820" width="1" height="1"/><rect x="1015" y="818" width="1" height="1"/><rect x="1017" y="820" width="1" height="1"/><rect x="1019" y="818" width="1" height="1"/><rect x="1021" y="820" width="1" height="1"/><rect x="1023" y="818" width="1" height="1"/><rect x="1025" y="820" width="1" height="1"/><rect x="1027" y="818" width="1" height="1"/><rect x="1029" y="820" width="1" height="1"/><rect x="1031" y="818" width="1" height="1"/><rect x="1033" y="820" width="1" height="1"/><rect x="1035" y="818" width="1" height="1"/><rect x="1037" y="820" width="1" height="1"/><rect x="1039" y="818" width="1" height="1"/><rect x="1041" y="820" width="1" height="1"/><rect x="1043" y="818" width="1" height="1"/><rect x="1045" y="820" width="1" height="1"/><rect x="1047" y="818" width="1" height="1"/><rect x="1049" y="820" width="1" height="1"/><rect x="1051" y="818" width="1" height="1"/></g><path d="M195 820.5 L199 816.5 L203.5 820.5 Z" fill="#5b7fc6"/><path d="M195 820.5 L199 816.5" stroke="#222" stroke-width="1"/><path d="M207 816.5 L215.5 816.5 L211 820.5 Z" fill="#5b7fc6"/><path d="M207 816.5 H215.5" stroke="#222" stroke-width="1"/></svg>
<div style="left:192px;top:823px;width:863px;height:1px;background:#7a8a99;"></div>
<div style="left:192px;top:824px;width:862px;height:20px;background:#e8ad88;"></div>
<svg style="position:absolute;left:0;top:0" width="1058" height="859"><path d="M194.5 844 V832.5 L200.5 826.5 H267.5 V844" fill="#c8dcf0" stroke="#5b7fc6" stroke-width="1"/><path d="M195.5 844 V832.9 L200.9 827.5 H266.5" fill="none" stroke="#fff" stroke-width="1"/></svg>
<div class="t" style="left:205.7px;top:829px;font-size:13px;line-height:13px;font-weight:bold;color:#222;letter-spacing:1.120px;">Задачи</div>
<div style="left:192px;top:844px;width:75px;height:1px;background:#c8dcf0;"></div>
<div style="left:268px;top:844px;width:786px;height:1px;background:#5b7fc6;"></div>
<div style="left:268px;top:845px;width:786px;height:1px;background:#ffffff;"></div>
<div style="left:192px;top:845px;width:862px;height:9px;background:#c8dcf0;"></div>
<div style="left:192px;top:844px;width:1px;height:11px;background:#5b7fc6;"></div>
<div style="left:194px;top:848px;width:16px;height:5px;background:#b8c8d8;border:1px solid #7a8a99;box-sizing:border-box;"></div>
<svg style="position:absolute;left:194px;top:848px" width="16" height="5"><path d="M1.5 4 L3.5 2 L5.5 4 Z M10.5 4 L12.5 2 L14.5 4 Z" fill="#1848c8"/></svg>
<div style="left:210px;top:848px;width:842px;height:3px;background:#fff;border-top:1px solid #7a8a99;border-bottom:1px solid #7a8a99;box-sizing:border-box;"></div>
<div style="left:194px;top:851px;width:858px;height:1px;background:#ffffff;"></div>
<div style="left:294px;top:849px;width:1px;height:1px;background:#7a8a99;"></div>
<div style="left:378px;top:849px;width:1px;height:1px;background:#7a8a99;"></div>
<div style="left:462px;top:849px;width:1px;height:1px;background:#7a8a99;"></div>
<div style="left:546px;top:849px;width:1px;height:1px;background:#7a8a99;"></div>
<div style="left:630px;top:849px;width:1px;height:1px;background:#7a8a99;"></div>
<div style="left:714px;top:849px;width:1px;height:1px;background:#7a8a99;"></div>
<div style="left:797px;top:849px;width:1px;height:1px;background:#7a8a99;"></div>
<div style="left:881px;top:849px;width:1px;height:1px;background:#7a8a99;"></div>
<div style="left:965px;top:849px;width:1px;height:1px;background:#7a8a99;"></div>
<div style="left:1049px;top:849px;width:1px;height:1px;background:#7a8a99;"></div>
<div style="left:192px;top:854px;width:863px;height:1px;background:#7a8a99;"></div>
<div style="left:192px;top:855px;width:863px;height:1px;background:#ffffff;"></div>
</body></html>
